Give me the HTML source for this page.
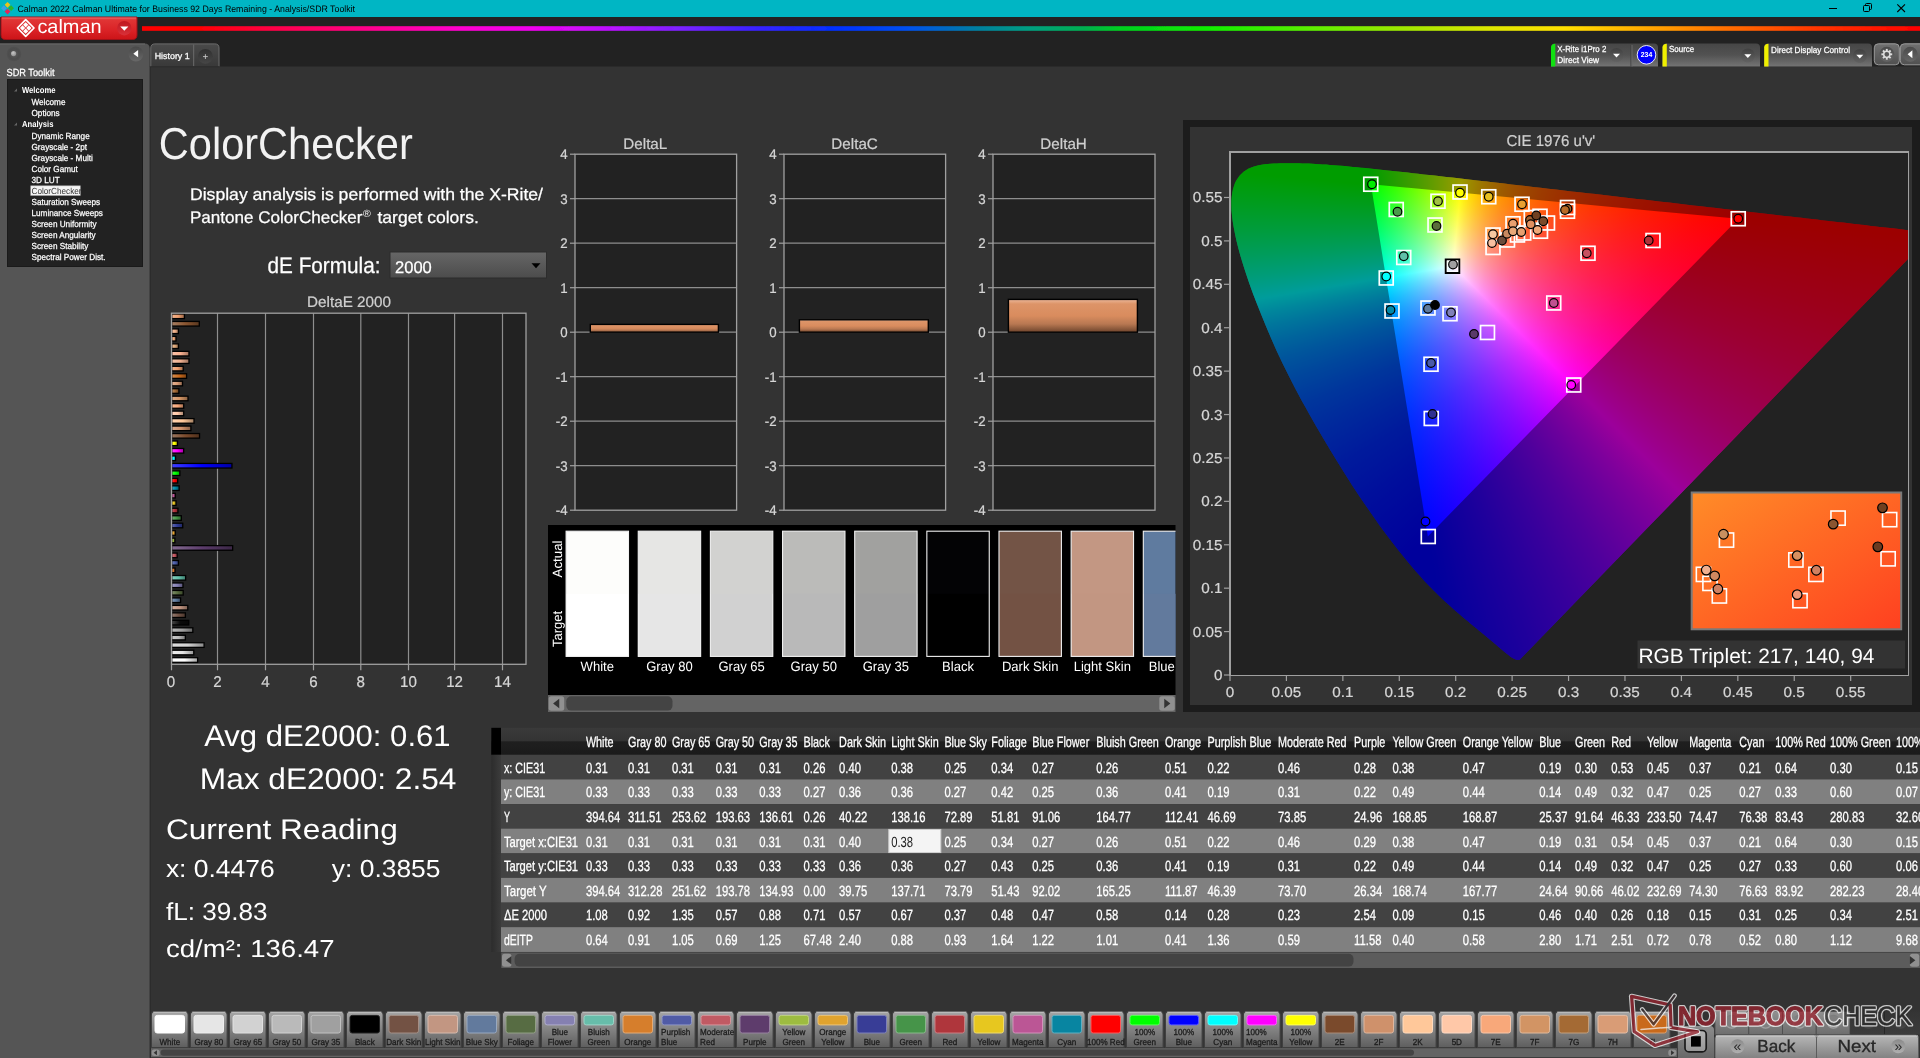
<!DOCTYPE html>
<html lang="en"><head><meta charset="utf-8"><title>Calman ColorChecker</title><style>html,body{margin:0;padding:0}body{background:#333;width:1920px;height:1058px;position:relative;overflow:hidden;font-family:"Liberation Sans",sans-serif}
svg{position:absolute;left:0;top:0;font-family:"Liberation Sans",sans-serif;will-change:transform;text-rendering:geometricPrecision}
.cl{position:absolute;left:0;top:0;width:100%;height:100%}.cd{mix-blend-mode:darken}</style></head><body>
<svg width="1920" height="1058" viewBox="0 0 1920 1058"><defs><linearGradient id="a1" x1="142" y1="0" x2="1920" y2="0" gradientUnits="userSpaceOnUse"><stop offset="0" stop-color="#ff0000"/><stop offset="0.03" stop-color="#ff0000"/><stop offset="0.08" stop-color="#ff0050"/><stop offset="0.13" stop-color="#ff0090"/><stop offset="0.18" stop-color="#ff00d0"/><stop offset="0.22" stop-color="#f000f0"/><stop offset="0.26" stop-color="#c010ff"/><stop offset="0.3" stop-color="#8020ff"/><stop offset="0.34" stop-color="#4020ff"/><stop offset="0.39" stop-color="#0030ff"/><stop offset="0.43" stop-color="#0050f0"/><stop offset="0.47" stop-color="#0080a0"/><stop offset="0.5" stop-color="#00a080"/><stop offset="0.53" stop-color="#00b050"/><stop offset="0.55" stop-color="#00d020"/><stop offset="0.6" stop-color="#10f000"/><stop offset="0.66" stop-color="#60f000"/><stop offset="0.71" stop-color="#a0e800"/><stop offset="0.76" stop-color="#e0e800"/><stop offset="0.8" stop-color="#ffe000"/><stop offset="0.84" stop-color="#ffb000"/><stop offset="0.89" stop-color="#ff7000"/><stop offset="0.94" stop-color="#ff3800"/><stop offset="1" stop-color="#ff0000"/></linearGradient><filter id="blr" x="-1%" y="-100%" width="102%" height="300%"><feGaussianBlur stdDeviation="0 0.7"/></filter><linearGradient id="a2" x1="0" y1="0" x2="0" y2="1"><stop offset="0" stop-color="#e84a4a"/><stop offset="0.15" stop-color="#e03434"/><stop offset="0.6" stop-color="#da2226"/><stop offset="1" stop-color="#cc1418"/></linearGradient><linearGradient id="a3" x1="0" y1="0" x2="0" y2="1"><stop offset="0" stop-color="#c01820"/><stop offset="1" stop-color="#d83038"/></linearGradient><radialGradient id="a4" cx="0.5" cy="0.5" r="0.5"><stop offset="0" stop-color="#5e5e5e"/><stop offset="0.7" stop-color="#4c4c4c"/><stop offset="1" stop-color="#505050"/></radialGradient><radialGradient id="a5" cx="0.4" cy="0.35" r="0.7"><stop offset="0" stop-color="#c8c8c8"/><stop offset="1" stop-color="#8a8a8a"/></radialGradient><linearGradient id="a6" x1="0" y1="0" x2="0" y2="1"><stop offset="0" stop-color="#484848"/><stop offset="1" stop-color="#686868"/></linearGradient><linearGradient id="a7" x1="0" y1="0" x2="0" y2="1"><stop offset="0" stop-color="#4a4a4a"/><stop offset="1" stop-color="#393939"/></linearGradient><linearGradient id="a8" x1="0" y1="0" x2="0" y2="1"><stop offset="0" stop-color="#303030"/><stop offset="1" stop-color="#464646"/></linearGradient><linearGradient id="a9" x1="0" y1="0" x2="0" y2="1"><stop offset="0" stop-color="#464646"/><stop offset="0.5" stop-color="#525252"/><stop offset="1" stop-color="#747474"/></linearGradient><linearGradient id="a10" x1="0" y1="0" x2="0" y2="1"><stop offset="0" stop-color="#404040"/><stop offset="1" stop-color="#626262"/></linearGradient><linearGradient id="a11" x1="0" y1="0" x2="0" y2="1"><stop offset="0" stop-color="#404040"/><stop offset="1" stop-color="#626262"/></linearGradient><linearGradient id="a12" x1="0" y1="0" x2="0" y2="1"><stop offset="0" stop-color="#404040"/><stop offset="1" stop-color="#626262"/></linearGradient><linearGradient id="a13" x1="0" y1="0" x2="0" y2="1"><stop offset="0" stop-color="#707070"/><stop offset="1" stop-color="#505050"/></linearGradient><linearGradient id="a14" x1="0" y1="0" x2="0" y2="1"><stop offset="0" stop-color="#4a4a4a"/><stop offset="1" stop-color="#666"/></linearGradient><linearGradient id="a15" x1="0" y1="0" x2="0" y2="1"><stop offset="0" stop-color="#4a4a4a"/><stop offset="1" stop-color="#666"/></linearGradient><linearGradient id="a16" x1="0" y1="0" x2="0" y2="1"><stop offset="0" stop-color="#666666"/><stop offset="1" stop-color="#4c4c4c"/></linearGradient><linearGradient id="a17" x1="0" y1="0" x2="1" y2="0"><stop offset="0" stop-color="#ffffff"/><stop offset="0.5" stop-color="#ffffff"/><stop offset="1" stop-color="#a5a5a5"/></linearGradient><linearGradient id="a18" x1="0" y1="0" x2="1" y2="0"><stop offset="0" stop-color="#ececec"/><stop offset="0.5" stop-color="#e6e6e6"/><stop offset="1" stop-color="#959595"/></linearGradient><linearGradient id="a19" x1="0" y1="0" x2="1" y2="0"><stop offset="0" stop-color="#dddddd"/><stop offset="0.5" stop-color="#d2d2d2"/><stop offset="1" stop-color="#888888"/></linearGradient><linearGradient id="a20" x1="0" y1="0" x2="1" y2="0"><stop offset="0" stop-color="#cbcbcb"/><stop offset="0.5" stop-color="#bababa"/><stop offset="1" stop-color="#787878"/></linearGradient><linearGradient id="a21" x1="0" y1="0" x2="1" y2="0"><stop offset="0" stop-color="#b7b7b7"/><stop offset="0.5" stop-color="#a0a0a0"/><stop offset="1" stop-color="#686868"/></linearGradient><linearGradient id="a22" x1="0" y1="0" x2="1" y2="0"><stop offset="0" stop-color="#474747"/><stop offset="0.5" stop-color="#0a0a0a"/><stop offset="1" stop-color="#060606"/></linearGradient><linearGradient id="a23" x1="0" y1="0" x2="1" y2="0"><stop offset="0" stop-color="#967e74"/><stop offset="0.5" stop-color="#735446"/><stop offset="1" stop-color="#4a362d"/></linearGradient><linearGradient id="a24" x1="0" y1="0" x2="1" y2="0"><stop offset="0" stop-color="#d1b0a1"/><stop offset="0.5" stop-color="#c29682"/><stop offset="1" stop-color="#7e6154"/></linearGradient><linearGradient id="a25" x1="0" y1="0" x2="1" y2="0"><stop offset="0" stop-color="#869bb6"/><stop offset="0.5" stop-color="#5e7a9e"/><stop offset="1" stop-color="#3d4f66"/></linearGradient><linearGradient id="a26" x1="0" y1="0" x2="1" y2="0"><stop offset="0" stop-color="#81906f"/><stop offset="0.5" stop-color="#586c40"/><stop offset="1" stop-color="#394629"/></linearGradient><linearGradient id="a27" x1="0" y1="0" x2="1" y2="0"><stop offset="0" stop-color="#a39fc6"/><stop offset="0.5" stop-color="#8580b4"/><stop offset="1" stop-color="#565375"/></linearGradient><linearGradient id="a28" x1="0" y1="0" x2="1" y2="0"><stop offset="0" stop-color="#89cfbf"/><stop offset="0.5" stop-color="#62c0aa"/><stop offset="1" stop-color="#3f7c6e"/></linearGradient><linearGradient id="a29" x1="0" y1="0" x2="1" y2="0"><stop offset="0" stop-color="#e49b60"/><stop offset="0.5" stop-color="#dc7a2c"/><stop offset="1" stop-color="#8f4f1c"/></linearGradient><linearGradient id="a30" x1="0" y1="0" x2="1" y2="0"><stop offset="0" stop-color="#7784bd"/><stop offset="0.5" stop-color="#4a5ca8"/><stop offset="1" stop-color="#303b6d"/></linearGradient><linearGradient id="a31" x1="0" y1="0" x2="1" y2="0"><stop offset="0" stop-color="#d27e86"/><stop offset="0.5" stop-color="#c4545e"/><stop offset="1" stop-color="#7f363d"/></linearGradient><linearGradient id="a32" x1="0" y1="0" x2="1" y2="0"><stop offset="0" stop-color="#846c90"/><stop offset="0.5" stop-color="#5c3c6c"/><stop offset="1" stop-color="#3b2746"/></linearGradient><linearGradient id="a33" x1="0" y1="0" x2="1" y2="0"><stop offset="0" stop-color="#b6cc6f"/><stop offset="0.5" stop-color="#9ebc40"/><stop offset="1" stop-color="#667a29"/></linearGradient><linearGradient id="a34" x1="0" y1="0" x2="1" y2="0"><stop offset="0" stop-color="#ecb962"/><stop offset="0.5" stop-color="#e6a22e"/><stop offset="1" stop-color="#95691d"/></linearGradient><linearGradient id="a35" x1="0" y1="0" x2="1" y2="0"><stop offset="0" stop-color="#636cb0"/><stop offset="0.5" stop-color="#303c96"/><stop offset="1" stop-color="#1f2761"/></linearGradient><linearGradient id="a36" x1="0" y1="0" x2="1" y2="0"><stop offset="0" stop-color="#74b075"/><stop offset="0.5" stop-color="#469648"/><stop offset="1" stop-color="#2d612e"/></linearGradient><linearGradient id="a37" x1="0" y1="0" x2="1" y2="0"><stop offset="0" stop-color="#c36369"/><stop offset="0.5" stop-color="#b03038"/><stop offset="1" stop-color="#721f24"/></linearGradient><linearGradient id="a38" x1="0" y1="0" x2="1" y2="0"><stop offset="0" stop-color="#efd457"/><stop offset="0.5" stop-color="#eac620"/><stop offset="1" stop-color="#988014"/></linearGradient><linearGradient id="a39" x1="0" y1="0" x2="1" y2="0"><stop offset="0" stop-color="#ce7eb0"/><stop offset="0.5" stop-color="#be5496"/><stop offset="1" stop-color="#7b3661"/></linearGradient><linearGradient id="a40" x1="0" y1="0" x2="1" y2="0"><stop offset="0" stop-color="#3fa5bc"/><stop offset="0.5" stop-color="#0088a6"/><stop offset="1" stop-color="#00586b"/></linearGradient><linearGradient id="a41" x1="0" y1="0" x2="1" y2="0"><stop offset="0" stop-color="#ff3f3f"/><stop offset="0.5" stop-color="#ff0000"/><stop offset="1" stop-color="#a50000"/></linearGradient><linearGradient id="a42" x1="0" y1="0" x2="1" y2="0"><stop offset="0" stop-color="#3fff3f"/><stop offset="0.5" stop-color="#00ff00"/><stop offset="1" stop-color="#00a500"/></linearGradient><linearGradient id="a43" x1="0" y1="0" x2="1" y2="0"><stop offset="0" stop-color="#3f3fff"/><stop offset="0.5" stop-color="#0000ff"/><stop offset="1" stop-color="#0000a5"/></linearGradient><linearGradient id="a44" x1="0" y1="0" x2="1" y2="0"><stop offset="0" stop-color="#3fffff"/><stop offset="0.5" stop-color="#00ffff"/><stop offset="1" stop-color="#00a5a5"/></linearGradient><linearGradient id="a45" x1="0" y1="0" x2="1" y2="0"><stop offset="0" stop-color="#ff3fff"/><stop offset="0.5" stop-color="#ff00ff"/><stop offset="1" stop-color="#a500a5"/></linearGradient><linearGradient id="a46" x1="0" y1="0" x2="1" y2="0"><stop offset="0" stop-color="#ffff3f"/><stop offset="0.5" stop-color="#ffff00"/><stop offset="1" stop-color="#a5a500"/></linearGradient><linearGradient id="a47" x1="0" y1="0" x2="1" y2="0"><stop offset="0" stop-color="#9b7760"/><stop offset="0.5" stop-color="#7a4a2c"/><stop offset="1" stop-color="#4f301c"/></linearGradient><linearGradient id="a48" x1="0" y1="0" x2="1" y2="0"><stop offset="0" stop-color="#dbac90"/><stop offset="0.5" stop-color="#cf916b"/><stop offset="1" stop-color="#865e45"/></linearGradient><linearGradient id="a49" x1="0" y1="0" x2="1" y2="0"><stop offset="0" stop-color="#ffd5b3"/><stop offset="0.5" stop-color="#ffc89a"/><stop offset="1" stop-color="#a58264"/></linearGradient><linearGradient id="a50" x1="0" y1="0" x2="1" y2="0"><stop offset="0" stop-color="#ffd5bd"/><stop offset="0.5" stop-color="#ffc8a8"/><stop offset="1" stop-color="#a5826d"/></linearGradient><linearGradient id="a51" x1="0" y1="0" x2="1" y2="0"><stop offset="0" stop-color="#f9bd9b"/><stop offset="0.5" stop-color="#f8a87a"/><stop offset="1" stop-color="#a16d4f"/></linearGradient><linearGradient id="a52" x1="0" y1="0" x2="1" y2="0"><stop offset="0" stop-color="#ddae8a"/><stop offset="0.5" stop-color="#d29464"/><stop offset="1" stop-color="#886041"/></linearGradient><linearGradient id="a53" x1="0" y1="0" x2="1" y2="0"><stop offset="0" stop-color="#ba8f66"/><stop offset="0.5" stop-color="#a46a34"/><stop offset="1" stop-color="#6a4421"/></linearGradient><linearGradient id="a54" x1="0" y1="0" x2="1" y2="0"><stop offset="0" stop-color="#e2b498"/><stop offset="0.5" stop-color="#d99c76"/><stop offset="1" stop-color="#8d654c"/></linearGradient><linearGradient id="a55" x1="0" y1="0" x2="1" y2="0"><stop offset="0" stop-color="#d68f54"/><stop offset="0.5" stop-color="#c96a1c"/><stop offset="1" stop-color="#824412"/></linearGradient><linearGradient id="a56" x1="0" y1="0" x2="1" y2="0"><stop offset="0" stop-color="#f3b793"/><stop offset="0.5" stop-color="#f0a070"/><stop offset="1" stop-color="#9c6848"/></linearGradient><linearGradient id="a57" x1="0" y1="0" x2="1" y2="0"><stop offset="0" stop-color="#f3c3ab"/><stop offset="0.5" stop-color="#f0b090"/><stop offset="1" stop-color="#9c725d"/></linearGradient><linearGradient id="a58" x1="0" y1="0" x2="1" y2="0"><stop offset="0" stop-color="#f9c3ab"/><stop offset="0.5" stop-color="#f8b090"/><stop offset="1" stop-color="#a1725d"/></linearGradient><linearGradient id="a59" x1="0" y1="0" x2="1" y2="0"><stop offset="0" stop-color="#e7bd99"/><stop offset="0.5" stop-color="#e0a878"/><stop offset="1" stop-color="#916d4e"/></linearGradient><linearGradient id="a60" x1="0" y1="0" x2="1" y2="0"><stop offset="0" stop-color="#f3bd99"/><stop offset="0.5" stop-color="#f0a878"/><stop offset="1" stop-color="#9c6d4e"/></linearGradient><linearGradient id="a61" x1="0" y1="0" x2="1" y2="0"><stop offset="0" stop-color="#f3c3a5"/><stop offset="0.5" stop-color="#f0b088"/><stop offset="1" stop-color="#9c7258"/></linearGradient><linearGradient id="a62" x1="0" y1="0" x2="1" y2="0"><stop offset="0" stop-color="#a77f63"/><stop offset="0.5" stop-color="#8a5530"/><stop offset="1" stop-color="#59371f"/></linearGradient><linearGradient id="a63" x1="0" y1="0" x2="1" y2="0"><stop offset="0" stop-color="#f3b793"/><stop offset="0.5" stop-color="#f0a070"/><stop offset="1" stop-color="#9c6848"/></linearGradient><linearGradient id="a64" x1="0" y1="0" x2="0" y2="1"><stop offset="0" stop-color="#ecb799"/><stop offset="0.14" stop-color="#dd9468"/><stop offset="0.5" stop-color="#d98c5e"/><stop offset="0.75" stop-color="#b87852"/><stop offset="1" stop-color="#6e442c"/></linearGradient><linearGradient id="a65" x1="0" y1="0" x2="0" y2="1"><stop offset="0" stop-color="#ecb799"/><stop offset="0.14" stop-color="#dd9468"/><stop offset="0.5" stop-color="#d98c5e"/><stop offset="0.75" stop-color="#b87852"/><stop offset="1" stop-color="#6e442c"/></linearGradient><linearGradient id="a66" x1="0" y1="0" x2="0" y2="1"><stop offset="0" stop-color="#ecb799"/><stop offset="0.14" stop-color="#dd9468"/><stop offset="0.5" stop-color="#d98c5e"/><stop offset="0.75" stop-color="#b87852"/><stop offset="1" stop-color="#6e442c"/></linearGradient><clipPath id="swc"><rect x="548.5" y="525" width="627" height="170"/></clipPath><linearGradient id="a67" x1="0" y1="0" x2="0" y2="1"><stop offset="0" stop-color="#3a3a3a"/><stop offset="0.48" stop-color="#333333"/><stop offset="0.52" stop-color="#1f1f1f"/><stop offset="1" stop-color="#1a1a1a"/></linearGradient><clipPath id="tbc"><rect x="491" y="720" width="1429" height="250"/></clipPath><linearGradient id="a68" x1="0" y1="0" x2="1" y2="0"><stop offset="0" stop-color="#2c2c2c"/><stop offset="1" stop-color="#3c3c3c"/></linearGradient><linearGradient id="a69" x1="0" y1="0" x2="1" y2="0"><stop offset="0" stop-color="#2c2c2c"/><stop offset="1" stop-color="#3c3c3c"/></linearGradient><linearGradient id="a70" x1="0" y1="0" x2="1" y2="0"><stop offset="0" stop-color="#2c2c2c"/><stop offset="1" stop-color="#3c3c3c"/></linearGradient><linearGradient id="a71" x1="0" y1="0" x2="1" y2="0"><stop offset="0" stop-color="#2c2c2c"/><stop offset="1" stop-color="#3c3c3c"/></linearGradient><linearGradient id="a72" x1="0" y1="0" x2="1" y2="0"><stop offset="0" stop-color="#2c2c2c"/><stop offset="1" stop-color="#3c3c3c"/></linearGradient><linearGradient id="a73" x1="0" y1="0" x2="1" y2="0"><stop offset="0" stop-color="#2c2c2c"/><stop offset="1" stop-color="#3c3c3c"/></linearGradient><linearGradient id="a74" x1="0" y1="0" x2="1" y2="0"><stop offset="0" stop-color="#2c2c2c"/><stop offset="1" stop-color="#3c3c3c"/></linearGradient><linearGradient id="a75" x1="0" y1="0" x2="1" y2="0"><stop offset="0" stop-color="#2c2c2c"/><stop offset="1" stop-color="#3c3c3c"/></linearGradient><linearGradient id="a76" x1="0" y1="0" x2="0" y2="1"><stop offset="0" stop-color="#a6a6a6"/><stop offset="0.5" stop-color="#828282"/><stop offset="1" stop-color="#5e5e5e"/></linearGradient><clipPath id="bbc"><rect x="150" y="1005" width="1527" height="53"/></clipPath><linearGradient id="a77" x1="0" y1="0" x2="0" y2="1"><stop offset="0" stop-color="#8c8c8c"/><stop offset="1" stop-color="#686868"/></linearGradient><linearGradient id="a78" x1="0" y1="0" x2="0" y2="1"><stop offset="0" stop-color="#b4b4b4"/><stop offset="1" stop-color="#969696"/></linearGradient><linearGradient id="a79" x1="0" y1="0" x2="0" y2="1"><stop offset="0" stop-color="#909090"/><stop offset="1" stop-color="#6e6e6e"/></linearGradient><linearGradient id="a80" x1="0" y1="0" x2="0" y2="1"><stop offset="0" stop-color="#7a7a7a"/><stop offset="1" stop-color="#a2a2a2"/></linearGradient><linearGradient id="a81" x1="0" y1="0" x2="0" y2="1"><stop offset="0" stop-color="#343434"/><stop offset="1" stop-color="#3c3c3c"/></linearGradient><linearGradient id="a82" x1="0" y1="0" x2="0" y2="1"><stop offset="0" stop-color="#2c2c2c"/><stop offset="1" stop-color="#484848"/></linearGradient><linearGradient id="a83" x1="0" y1="0" x2="0" y2="1"><stop offset="0" stop-color="#2c2c2c"/><stop offset="1" stop-color="#484848"/></linearGradient><linearGradient id="a84" x1="0" y1="0" x2="0" y2="1"><stop offset="0" stop-color="#b8b8b8"/><stop offset="0.5" stop-color="#9a9a9a"/><stop offset="1" stop-color="#7e7e7e"/></linearGradient><linearGradient id="a85" x1="0" y1="0" x2="0" y2="1"><stop offset="0" stop-color="#8a8a8a"/><stop offset="1" stop-color="#b0b0b0"/></linearGradient><linearGradient id="a86" x1="0" y1="0" x2="0" y2="1"><stop offset="0" stop-color="#8a8a8a"/><stop offset="1" stop-color="#b0b0b0"/></linearGradient></defs>
<rect x="0" y="0" width="1920" height="1058" fill="#333333"/>
<rect x="0" y="0" width="1920" height="17" fill="#00b6c4"/>
<path d="M7.5 1.9 L10.4 4.8 L7.5 7.7 L4.6 4.8 Z" fill="#e8c41c"/>
<path d="M3.9 5.3 L6.8 8.2 L3.9 11.1 L1 8.2 Z" fill="#3aa0e8"/>
<path d="M11.1 5.3 L14 8.2 L11.1 11.1 L8.2 8.2 Z" fill="#2cb42c"/>
<path d="M7.5 8.7 L10.4 11.6 L7.5 14.5 L4.6 11.6 Z" fill="#e0285a"/>
<text x="17.5" y="12.2" font-size="9.3" fill="#000" textLength="337.5" lengthAdjust="spacingAndGlyphs">Calman 2022 Calman Ultimate for Business 92 Days Remaining  - Analysis/SDR Toolkit</text>
<line x1="1829" y1="8.5" x2="1837" y2="8.5" stroke="#000" stroke-width="1"/>
<rect x="1863.5" y="5.5" width="6" height="6" fill="none" rx="1" stroke="#000" stroke-width="1"/>
<path d="M1865.5 5.5 V4.5 Q1865.5 3.5 1866.5 3.5 H1870.5 Q1871.5 3.5 1871.5 4.5 V8.5 Q1871.5 9.5 1870.5 9.5 H1869.5" fill="none" stroke="#000" stroke-width="1"/>
<path d="M1897.3 4.3 L1905 12 M1905 4.3 L1897.3 12" fill="none" stroke="#000" stroke-width="1.1"/>
<rect x="0" y="17" width="1920" height="49.5" fill="#222222"/>
<rect x="142" y="26.2" width="1778" height="4.6" fill="url(#a1)" filter="url(#blr)"/>
<path d="M1 17 H137 V35 Q137 39.5 132.5 39.5 H5.5 Q1 39.5 1 35 Z" fill="url(#a2)" stroke="#a01018" stroke-width="1"/>
<line x1="2" y1="18" x2="136" y2="18" stroke="#f08080" stroke-width="1" opacity=".6"/>
<path d="M25.7 19.7 L34 28 L25.7 36.3 L17.4 28 Z" fill="none" stroke="#fff" stroke-width="1.7" stroke-linejoin="round"/>
<path d="M25.7 22.19 L28.36 24.85 L25.7 27.5 L23.04 24.85 Z" fill="#fff"/>
<path d="M28.85 25.34 L31.51 28 L28.85 30.66 L26.2 28 Z" fill="#fff"/>
<path d="M25.7 28.5 L28.36 31.15 L25.7 33.81 L23.04 31.15 Z" fill="#fff"/>
<path d="M22.55 25.34 L25.2 28 L22.55 30.66 L19.89 28 Z" fill="#fff"/>
<text x="37.4" y="33.1" font-size="19.3" fill="#fff" textLength="64.2" lengthAdjust="spacingAndGlyphs">calman</text>
<circle cx="124.3" cy="28.2" r="7.2" fill="url(#a3)"/>
<path d="M120.2 26.6 H128.4 L124.3 30.8 Z" fill="#fff"/>
<path d="M0 43.5 H144.5 Q149.7 43.5 149.7 48.5 V1058 H0 Z" fill="#555555"/>
<line x1="0" y1="44" x2="145" y2="44" stroke="#6a6a6a" stroke-width="1"/>
<line x1="150.3" y1="66" x2="150.3" y2="1058" stroke="#2b2b2b" stroke-width="1"/>
<circle cx="14" cy="54" r="7.3" fill="url(#a4)"/>
<circle cx="13.6" cy="53.6" r="2.6" fill="url(#a5)"/>
<circle cx="135.9" cy="54" r="7.4" fill="url(#a6)"/>
<path d="M133.3 53.7 L138.1 50 V57.3 Z" fill="#fff"/>
<text x="6.5" y="76" font-size="10.4" fill="#fff" textLength="48" lengthAdjust="spacingAndGlyphs" stroke="#fff" stroke-width=".25">SDR Toolkit</text>
<rect x="7" y="79" width="136" height="188" fill="#222222"/>
<rect x="7.5" y="79.5" width="135" height="187" fill="none" stroke="#1a1a1a" stroke-width="1"/>
<text x="22" y="93" font-size="8.8" fill="#fff" font-weight="bold" textLength="33.47" lengthAdjust="spacingAndGlyphs">Welcome</text>
<path d="M14 91.5 l3 -3 v3 z" fill="#666"/>
<text x="31.5" y="105.2" font-size="8.8" fill="#fff" textLength="33.96" lengthAdjust="spacingAndGlyphs" stroke="#fff" stroke-width=".25">Welcome</text>
<text x="31.5" y="115.9" font-size="8.8" fill="#fff" textLength="28.2" lengthAdjust="spacingAndGlyphs" stroke="#fff" stroke-width=".25">Options</text>
<text x="22" y="127" font-size="8.8" fill="#fff" font-weight="bold" textLength="31.49" lengthAdjust="spacingAndGlyphs">Analysis</text>
<path d="M14 125.5 l3 -3 v3 z" fill="#666"/>
<text x="31.5" y="139" font-size="8.8" fill="#fff" textLength="58.22" lengthAdjust="spacingAndGlyphs" stroke="#fff" stroke-width=".25">Dynamic Range</text>
<text x="31.5" y="149.8" font-size="8.8" fill="#fff" textLength="55.49" lengthAdjust="spacingAndGlyphs" stroke="#fff" stroke-width=".25">Grayscale - 2pt</text>
<text x="31.5" y="160.8" font-size="8.8" fill="#fff" textLength="61.39" lengthAdjust="spacingAndGlyphs" stroke="#fff" stroke-width=".25">Grayscale - Multi</text>
<text x="31.5" y="171.8" font-size="8.8" fill="#fff" textLength="46.39" lengthAdjust="spacingAndGlyphs" stroke="#fff" stroke-width=".25">Color Gamut</text>
<text x="31.5" y="182.5" font-size="8.8" fill="#fff" textLength="28.2" lengthAdjust="spacingAndGlyphs" stroke="#fff" stroke-width=".25">3D LUT</text>
<rect x="30.7" y="185.8" width="49.6" height="9.8" fill="#f4f4f4" stroke="#999" stroke-width="0.6"/>
<text x="31.5" y="193.7" font-size="8.8" fill="#333" textLength="50.03" lengthAdjust="spacingAndGlyphs">ColorChecker</text>
<text x="31.5" y="205" font-size="8.8" fill="#fff" textLength="68.7" lengthAdjust="spacingAndGlyphs" stroke="#fff" stroke-width=".25">Saturation Sweeps</text>
<text x="31.5" y="215.8" font-size="8.8" fill="#fff" textLength="71.43" lengthAdjust="spacingAndGlyphs" stroke="#fff" stroke-width=".25">Luminance Sweeps</text>
<text x="31.5" y="226.8" font-size="8.8" fill="#fff" textLength="65.04" lengthAdjust="spacingAndGlyphs" stroke="#fff" stroke-width=".25">Screen Uniformity</text>
<text x="31.5" y="238" font-size="8.8" fill="#fff" textLength="64.15" lengthAdjust="spacingAndGlyphs" stroke="#fff" stroke-width=".25">Screen Angularity</text>
<text x="31.5" y="248.8" font-size="8.8" fill="#fff" textLength="56.86" lengthAdjust="spacingAndGlyphs" stroke="#fff" stroke-width=".25">Screen Stability</text>
<text x="31.5" y="260" font-size="8.8" fill="#fff" textLength="74.14" lengthAdjust="spacingAndGlyphs" stroke="#fff" stroke-width=".25">Spectral Power Dist.</text>
<path d="M150.8 66.5 V48 Q150.8 43.9 154.9 43.9 H214.9 Q219 43.9 219 48 V66.5" fill="url(#a7)" stroke="#6c6c6c" stroke-width="1"/>
<line x1="193.7" y1="44.5" x2="193.7" y2="66.3" stroke="#6c6c6c" stroke-width="1"/>
<rect x="150.3" y="66.2" width="69.2" height="1.2" fill="#2e2e2e"/>
<text x="154.7" y="59" font-size="8.8" fill="#fff" textLength="35" lengthAdjust="spacingAndGlyphs" stroke="#fff" stroke-width=".25">History 1</text>
<circle cx="205.4" cy="56.3" r="7.4" fill="url(#a8)"/>
<path d="M203 56.6 H207.8 M205.4 54.2 V59" fill="none" stroke="#c4c4c4" stroke-width="0.9"/>
<path d="M1551 66.5 V47.5 Q1551 43.5 1555 43.5 H1654 Q1658 43.5 1658 47.5 V66.5 Z" fill="url(#a9)"/>
<path d="M1551 66.5 V47.5 Q1551 44 1555.3 43.8 V66.5 Z" fill="#10e010"/>
<text x="1557.3" y="52.3" font-size="8.8" fill="#fff" textLength="49" lengthAdjust="spacingAndGlyphs" stroke="#fff" stroke-width=".25">X-Rite i1Pro 2</text>
<text x="1557.3" y="62.8" font-size="8.8" fill="#fff" textLength="41.8" lengthAdjust="spacingAndGlyphs" stroke="#fff" stroke-width=".25">Direct View</text>
<circle cx="1616.5" cy="55" r="7" fill="url(#a10)"/>
<path d="M1613 53.7 h7 l-3.5 3.8 z" fill="#fff"/>
<line x1="1631" y1="45" x2="1631" y2="66.5" stroke="#3e3e3e" stroke-width="1"/>
<line x1="1632" y1="45" x2="1632" y2="66.5" stroke="#6a6a6a" stroke-width="1"/>
<circle cx="1646.5" cy="54.8" r="9.3" fill="#0000ff" stroke="#fff" stroke-width="0.9"/>
<text x="1646.5" y="57.4" font-size="7.2" fill="#fff" text-anchor="middle" font-weight="bold" textLength="11.5" lengthAdjust="spacingAndGlyphs">234</text>
<path d="M1662.5 66.5 V47.5 Q1662.5 43.5 1666.5 43.5 H1756 Q1760 43.5 1760 47.5 V66.5 Z" fill="url(#a9)"/>
<path d="M1662.5 66.5 V47.5 Q1662.5 44 1666.8 43.8 V66.5 Z" fill="#f0f000"/>
<text x="1669" y="52.3" font-size="8.8" fill="#fff" textLength="25.3" lengthAdjust="spacingAndGlyphs" stroke="#fff" stroke-width=".25">Source</text>
<circle cx="1747.8" cy="55.5" r="7" fill="url(#a11)"/>
<path d="M1744.3 54.2 h7 l-3.5 3.8 z" fill="#fff"/>
<path d="M1764.2 66.5 V47.5 Q1764.2 43.5 1768.2 43.5 H1868 Q1872 43.5 1872 47.5 V66.5 Z" fill="url(#a9)"/>
<path d="M1764.2 66.5 V47.5 Q1764.2 44 1768.5 43.8 V66.5 Z" fill="#f0f000"/>
<text x="1771" y="52.8" font-size="8.8" fill="#fff" textLength="79" lengthAdjust="spacingAndGlyphs" stroke="#fff" stroke-width=".25">Direct Display Control</text>
<circle cx="1859.8" cy="56" r="7" fill="url(#a12)"/>
<path d="M1856.3 54.7 h7 l-3.5 3.8 z" fill="#fff"/>
<rect x="1874.3" y="43.8" width="25" height="21" fill="url(#a13)" rx="4" stroke="#9a9a9a" stroke-width="1"/>
<rect x="1900.3" y="43.8" width="25" height="21" fill="url(#a13)" rx="4" stroke="#9a9a9a" stroke-width="1"/>
<circle cx="1886.8" cy="54.3" r="7.5" fill="url(#a14)"/>
<line x1="1890" y1="54.3" x2="1892.2" y2="54.3" stroke="#ddd" stroke-width="1.9"/><line x1="1889.06" y1="56.56" x2="1890.62" y2="58.12" stroke="#ddd" stroke-width="1.9"/><line x1="1886.8" y1="57.5" x2="1886.8" y2="59.7" stroke="#ddd" stroke-width="1.9"/><line x1="1884.54" y1="56.56" x2="1882.98" y2="58.12" stroke="#ddd" stroke-width="1.9"/><line x1="1883.6" y1="54.3" x2="1881.4" y2="54.3" stroke="#ddd" stroke-width="1.9"/><line x1="1884.54" y1="52.04" x2="1882.98" y2="50.48" stroke="#ddd" stroke-width="1.9"/><line x1="1886.8" y1="51.1" x2="1886.8" y2="48.9" stroke="#ddd" stroke-width="1.9"/><line x1="1889.06" y1="52.04" x2="1890.62" y2="50.48" stroke="#ddd" stroke-width="1.9"/>
<circle cx="1886.8" cy="54.3" r="3.1" fill="none" stroke="#ddd" stroke-width="1.5"/>
<circle cx="1910.3" cy="54.3" r="7.5" fill="url(#a15)"/>
<path d="M1907.6 54.3 L1912.4 50.3 V58.3 Z" fill="#fff"/>
<text x="158.8" y="158.8" font-size="44.7" fill="#f2f2f2" textLength="254" lengthAdjust="spacingAndGlyphs">ColorChecker</text>
<text x="190" y="199.5" font-size="16.9" fill="#fff" textLength="353" lengthAdjust="spacingAndGlyphs" stroke="#fff" stroke-width=".25">Display analysis is performed with the X-Rite/</text>
<text x="190" y="222.5" font-size="16.9" fill="#fff" textLength="172.5" lengthAdjust="spacingAndGlyphs" stroke="#fff" stroke-width=".25">Pantone ColorChecker</text>
<text x="363" y="217.2" font-size="10.5" fill="#fff">®</text>
<text x="377.5" y="222.5" font-size="16.9" fill="#fff" textLength="101.3" lengthAdjust="spacingAndGlyphs" stroke="#fff" stroke-width=".25">target colors.</text>
<text x="267.5" y="272.5" font-size="22.4" fill="#fff" textLength="113" lengthAdjust="spacingAndGlyphs" stroke="#fff" stroke-width=".25">dE Formula:</text>
<rect x="390" y="252" width="156.5" height="26" fill="url(#a16)" stroke="#2c2c2c" stroke-width="1"/>
<text x="395" y="273" font-size="16.9" fill="#fff" textLength="36.8" lengthAdjust="spacingAndGlyphs" stroke="#fff" stroke-width=".25">2000</text>
<path d="M531.5 263.2 h9 l-4.5 5 z" fill="#000"/>
<text x="349" y="307" font-size="15.2" fill="#cfcfcf" text-anchor="middle" textLength="84" lengthAdjust="spacingAndGlyphs" stroke="#cfcfcf" stroke-width=".22">DeltaE 2000</text>
<rect x="171.5" y="313.2" width="354.5" height="351.1" fill="#222222"/>
<line x1="217.5" y1="313.2" x2="217.5" y2="664.3" stroke="#8e8e8e" stroke-width="1.2"/>
<line x1="265.5" y1="313.2" x2="265.5" y2="664.3" stroke="#8e8e8e" stroke-width="1.2"/>
<line x1="313.5" y1="313.2" x2="313.5" y2="664.3" stroke="#8e8e8e" stroke-width="1.2"/>
<line x1="360.8" y1="313.2" x2="360.8" y2="664.3" stroke="#8e8e8e" stroke-width="1.2"/>
<line x1="408.5" y1="313.2" x2="408.5" y2="664.3" stroke="#8e8e8e" stroke-width="1.2"/>
<line x1="454.6" y1="313.2" x2="454.6" y2="664.3" stroke="#8e8e8e" stroke-width="1.2"/>
<line x1="502.5" y1="313.2" x2="502.5" y2="664.3" stroke="#8e8e8e" stroke-width="1.2"/>
<line x1="171.5" y1="664.3" x2="171.5" y2="670.3" stroke="#a0a0a0" stroke-width="1.2"/>
<line x1="217.5" y1="664.3" x2="217.5" y2="670.3" stroke="#a0a0a0" stroke-width="1.2"/>
<line x1="265.5" y1="664.3" x2="265.5" y2="670.3" stroke="#a0a0a0" stroke-width="1.2"/>
<line x1="313.5" y1="664.3" x2="313.5" y2="670.3" stroke="#a0a0a0" stroke-width="1.2"/>
<line x1="360.8" y1="664.3" x2="360.8" y2="670.3" stroke="#a0a0a0" stroke-width="1.2"/>
<line x1="408.5" y1="664.3" x2="408.5" y2="670.3" stroke="#a0a0a0" stroke-width="1.2"/>
<line x1="454.6" y1="664.3" x2="454.6" y2="670.3" stroke="#a0a0a0" stroke-width="1.2"/>
<line x1="502.5" y1="664.3" x2="502.5" y2="670.3" stroke="#a0a0a0" stroke-width="1.2"/>
<rect x="171.7" y="657.7" width="25.92" height="4.6" fill="url(#a17)" stroke="#000" stroke-width="1.3"/>
<rect x="171.7" y="650.23" width="22.08" height="4.6" fill="url(#a18)" stroke="#000" stroke-width="1.3"/>
<rect x="171.7" y="642.76" width="32.4" height="4.6" fill="url(#a19)" stroke="#000" stroke-width="1.3"/>
<rect x="171.7" y="635.28" width="13.68" height="4.6" fill="url(#a20)" stroke="#000" stroke-width="1.3"/>
<rect x="171.7" y="627.81" width="21.12" height="4.6" fill="url(#a21)" stroke="#000" stroke-width="1.3"/>
<rect x="171.7" y="620.34" width="17.04" height="4.6" fill="url(#a22)" stroke="#000" stroke-width="1.3"/>
<rect x="171.7" y="612.87" width="13.68" height="4.6" fill="url(#a23)" stroke="#000" stroke-width="1.3"/>
<rect x="171.7" y="605.4" width="16.08" height="4.6" fill="url(#a24)" stroke="#000" stroke-width="1.3"/>
<rect x="171.7" y="597.92" width="8.88" height="4.6" fill="url(#a25)" stroke="#000" stroke-width="1.3"/>
<rect x="171.7" y="590.45" width="11.52" height="4.6" fill="url(#a26)" stroke="#000" stroke-width="1.3"/>
<rect x="171.7" y="582.98" width="11.28" height="4.6" fill="url(#a27)" stroke="#000" stroke-width="1.3"/>
<rect x="171.7" y="575.51" width="13.92" height="4.6" fill="url(#a28)" stroke="#000" stroke-width="1.3"/>
<rect x="171.7" y="568.04" width="3.36" height="4.6" fill="url(#a29)" stroke="#000" stroke-width="1.3"/>
<rect x="171.7" y="560.56" width="6.72" height="4.6" fill="url(#a30)" stroke="#000" stroke-width="1.3"/>
<rect x="171.7" y="553.09" width="5.52" height="4.6" fill="url(#a31)" stroke="#000" stroke-width="1.3"/>
<rect x="171.7" y="545.62" width="60.96" height="4.6" fill="url(#a32)" stroke="#000" stroke-width="1.3"/>
<rect x="171.7" y="538.15" width="3.2" height="4.6" fill="url(#a33)" stroke="#000" stroke-width="1.3"/>
<rect x="171.7" y="530.68" width="3.6" height="4.6" fill="url(#a34)" stroke="#000" stroke-width="1.3"/>
<rect x="171.7" y="523.2" width="11.04" height="4.6" fill="url(#a35)" stroke="#000" stroke-width="1.3"/>
<rect x="171.7" y="515.73" width="9.6" height="4.6" fill="url(#a36)" stroke="#000" stroke-width="1.3"/>
<rect x="171.7" y="508.26" width="6.24" height="4.6" fill="url(#a37)" stroke="#000" stroke-width="1.3"/>
<rect x="171.7" y="500.79" width="4.32" height="4.6" fill="url(#a38)" stroke="#000" stroke-width="1.3"/>
<rect x="171.7" y="493.32" width="3.6" height="4.6" fill="url(#a39)" stroke="#000" stroke-width="1.3"/>
<rect x="171.7" y="485.84" width="7.44" height="4.6" fill="url(#a40)" stroke="#000" stroke-width="1.3"/>
<rect x="171.7" y="478.37" width="6" height="4.6" fill="url(#a41)" stroke="#000" stroke-width="1.3"/>
<rect x="171.7" y="470.9" width="8.16" height="4.6" fill="url(#a42)" stroke="#000" stroke-width="1.3"/>
<rect x="171.7" y="463.43" width="60.24" height="4.6" fill="url(#a43)" stroke="#000" stroke-width="1.3"/>
<rect x="171.7" y="455.96" width="3.84" height="4.6" fill="url(#a44)" stroke="#000" stroke-width="1.3"/>
<rect x="171.7" y="448.48" width="12" height="4.6" fill="url(#a45)" stroke="#000" stroke-width="1.3"/>
<rect x="171.7" y="441.01" width="5.76" height="4.6" fill="url(#a46)" stroke="#000" stroke-width="1.3"/>
<rect x="171.7" y="433.54" width="27.84" height="4.6" fill="url(#a47)" stroke="#000" stroke-width="1.3"/>
<rect x="171.7" y="426.07" width="19.2" height="4.6" fill="url(#a48)" stroke="#000" stroke-width="1.3"/>
<rect x="171.7" y="418.6" width="22.32" height="4.6" fill="url(#a49)" stroke="#000" stroke-width="1.3"/>
<rect x="171.7" y="411.12" width="12" height="4.6" fill="url(#a50)" stroke="#000" stroke-width="1.3"/>
<rect x="171.7" y="403.65" width="12" height="4.6" fill="url(#a51)" stroke="#000" stroke-width="1.3"/>
<rect x="171.7" y="396.18" width="16.32" height="4.6" fill="url(#a52)" stroke="#000" stroke-width="1.3"/>
<rect x="171.7" y="388.71" width="7.2" height="4.6" fill="url(#a53)" stroke="#000" stroke-width="1.3"/>
<rect x="171.7" y="381.24" width="10.8" height="4.6" fill="url(#a54)" stroke="#000" stroke-width="1.3"/>
<rect x="171.7" y="373.76" width="14.88" height="4.6" fill="url(#a55)" stroke="#000" stroke-width="1.3"/>
<rect x="171.7" y="366.29" width="11.52" height="4.6" fill="url(#a56)" stroke="#000" stroke-width="1.3"/>
<rect x="171.7" y="358.82" width="17.28" height="4.6" fill="url(#a57)" stroke="#000" stroke-width="1.3"/>
<rect x="171.7" y="351.35" width="17.28" height="4.6" fill="url(#a58)" stroke="#000" stroke-width="1.3"/>
<rect x="171.7" y="343.88" width="6.72" height="4.6" fill="url(#a59)" stroke="#000" stroke-width="1.3"/>
<rect x="171.7" y="336.4" width="4.32" height="4.6" fill="url(#a60)" stroke="#000" stroke-width="1.3"/>
<rect x="171.7" y="328.93" width="6.72" height="4.6" fill="url(#a61)" stroke="#000" stroke-width="1.3"/>
<rect x="171.7" y="321.46" width="27.6" height="4.6" fill="url(#a62)" stroke="#000" stroke-width="1.3"/>
<rect x="171.7" y="313.99" width="12.72" height="4.6" fill="url(#a63)" stroke="#000" stroke-width="1.3"/>
<rect x="171.5" y="313.2" width="354.5" height="351.1" fill="none" stroke="#a0a0a0" stroke-width="1.3"/>
<text x="171" y="687.4" font-size="15.6" fill="#d6d6d6" text-anchor="middle" textLength="8.42" lengthAdjust="spacingAndGlyphs" stroke="#d6d6d6" stroke-width=".22">0</text>
<text x="217.5" y="687.4" font-size="15.6" fill="#d6d6d6" text-anchor="middle" textLength="8.42" lengthAdjust="spacingAndGlyphs" stroke="#d6d6d6" stroke-width=".22">2</text>
<text x="265.5" y="687.4" font-size="15.6" fill="#d6d6d6" text-anchor="middle" textLength="8.42" lengthAdjust="spacingAndGlyphs" stroke="#d6d6d6" stroke-width=".22">4</text>
<text x="313.5" y="687.4" font-size="15.6" fill="#d6d6d6" text-anchor="middle" textLength="8.42" lengthAdjust="spacingAndGlyphs" stroke="#d6d6d6" stroke-width=".22">6</text>
<text x="360.8" y="687.4" font-size="15.6" fill="#d6d6d6" text-anchor="middle" textLength="8.42" lengthAdjust="spacingAndGlyphs" stroke="#d6d6d6" stroke-width=".22">8</text>
<text x="408.5" y="687.4" font-size="15.6" fill="#d6d6d6" text-anchor="middle" textLength="16.83" lengthAdjust="spacingAndGlyphs" stroke="#d6d6d6" stroke-width=".22">10</text>
<text x="454.6" y="687.4" font-size="15.6" fill="#d6d6d6" text-anchor="middle" textLength="16.83" lengthAdjust="spacingAndGlyphs" stroke="#d6d6d6" stroke-width=".22">12</text>
<text x="502.5" y="687.4" font-size="15.6" fill="#d6d6d6" text-anchor="middle" textLength="16.83" lengthAdjust="spacingAndGlyphs" stroke="#d6d6d6" stroke-width=".22">14</text>
<rect x="575" y="154.2" width="161.6" height="356" fill="#222222"/>
<line x1="570" y1="154.2" x2="575" y2="154.2" stroke="#a0a0a0" stroke-width="1.2"/>
<text x="567.7" y="159.2" font-size="14" fill="#d6d6d6" text-anchor="end" textLength="7.4" lengthAdjust="spacingAndGlyphs" stroke="#d6d6d6" stroke-width=".22">4</text>
<line x1="575" y1="198.7" x2="736.6" y2="198.7" stroke="#8e8e8e" stroke-width="1.2"/>
<line x1="570" y1="198.7" x2="575" y2="198.7" stroke="#a0a0a0" stroke-width="1.2"/>
<text x="567.7" y="203.7" font-size="14" fill="#d6d6d6" text-anchor="end" textLength="7.4" lengthAdjust="spacingAndGlyphs" stroke="#d6d6d6" stroke-width=".22">3</text>
<line x1="575" y1="243.2" x2="736.6" y2="243.2" stroke="#8e8e8e" stroke-width="1.2"/>
<line x1="570" y1="243.2" x2="575" y2="243.2" stroke="#a0a0a0" stroke-width="1.2"/>
<text x="567.7" y="248.2" font-size="14" fill="#d6d6d6" text-anchor="end" textLength="7.4" lengthAdjust="spacingAndGlyphs" stroke="#d6d6d6" stroke-width=".22">2</text>
<line x1="575" y1="287.7" x2="736.6" y2="287.7" stroke="#8e8e8e" stroke-width="1.2"/>
<line x1="570" y1="287.7" x2="575" y2="287.7" stroke="#a0a0a0" stroke-width="1.2"/>
<text x="567.7" y="292.7" font-size="14" fill="#d6d6d6" text-anchor="end" textLength="7.4" lengthAdjust="spacingAndGlyphs" stroke="#d6d6d6" stroke-width=".22">1</text>
<line x1="575" y1="332.2" x2="736.6" y2="332.2" stroke="#8e8e8e" stroke-width="1.2"/>
<line x1="570" y1="332.2" x2="575" y2="332.2" stroke="#a0a0a0" stroke-width="1.2"/>
<text x="567.7" y="337.2" font-size="14" fill="#d6d6d6" text-anchor="end" textLength="7.4" lengthAdjust="spacingAndGlyphs" stroke="#d6d6d6" stroke-width=".22">0</text>
<line x1="575" y1="376.7" x2="736.6" y2="376.7" stroke="#8e8e8e" stroke-width="1.2"/>
<line x1="570" y1="376.7" x2="575" y2="376.7" stroke="#a0a0a0" stroke-width="1.2"/>
<text x="567.7" y="381.7" font-size="14" fill="#d6d6d6" text-anchor="end" textLength="11.83" lengthAdjust="spacingAndGlyphs" stroke="#d6d6d6" stroke-width=".22">-1</text>
<line x1="575" y1="421.2" x2="736.6" y2="421.2" stroke="#8e8e8e" stroke-width="1.2"/>
<line x1="570" y1="421.2" x2="575" y2="421.2" stroke="#a0a0a0" stroke-width="1.2"/>
<text x="567.7" y="426.2" font-size="14" fill="#d6d6d6" text-anchor="end" textLength="11.83" lengthAdjust="spacingAndGlyphs" stroke="#d6d6d6" stroke-width=".22">-2</text>
<line x1="575" y1="465.7" x2="736.6" y2="465.7" stroke="#8e8e8e" stroke-width="1.2"/>
<line x1="570" y1="465.7" x2="575" y2="465.7" stroke="#a0a0a0" stroke-width="1.2"/>
<text x="567.7" y="470.7" font-size="14" fill="#d6d6d6" text-anchor="end" textLength="11.83" lengthAdjust="spacingAndGlyphs" stroke="#d6d6d6" stroke-width=".22">-3</text>
<line x1="570" y1="510.2" x2="575" y2="510.2" stroke="#a0a0a0" stroke-width="1.2"/>
<text x="567.7" y="515.2" font-size="14" fill="#d6d6d6" text-anchor="end" textLength="11.83" lengthAdjust="spacingAndGlyphs" stroke="#d6d6d6" stroke-width=".22">-4</text>
<rect x="575" y="154.2" width="161.6" height="356" fill="none" stroke="#a0a0a0" stroke-width="1.3"/>
<text x="645.3" y="148.7" font-size="15.2" fill="#cfcfcf" text-anchor="middle" textLength="43.94" lengthAdjust="spacingAndGlyphs" stroke="#cfcfcf" stroke-width=".22">DeltaL</text>
<rect x="590.3" y="324.4" width="128.1" height="7.8" fill="url(#a64)" stroke="#000" stroke-width="1.4"/>
<rect x="784" y="154.2" width="161.6" height="356" fill="#222222"/>
<line x1="779" y1="154.2" x2="784" y2="154.2" stroke="#a0a0a0" stroke-width="1.2"/>
<text x="776.7" y="159.2" font-size="14" fill="#d6d6d6" text-anchor="end" textLength="7.4" lengthAdjust="spacingAndGlyphs" stroke="#d6d6d6" stroke-width=".22">4</text>
<line x1="784" y1="198.7" x2="945.6" y2="198.7" stroke="#8e8e8e" stroke-width="1.2"/>
<line x1="779" y1="198.7" x2="784" y2="198.7" stroke="#a0a0a0" stroke-width="1.2"/>
<text x="776.7" y="203.7" font-size="14" fill="#d6d6d6" text-anchor="end" textLength="7.4" lengthAdjust="spacingAndGlyphs" stroke="#d6d6d6" stroke-width=".22">3</text>
<line x1="784" y1="243.2" x2="945.6" y2="243.2" stroke="#8e8e8e" stroke-width="1.2"/>
<line x1="779" y1="243.2" x2="784" y2="243.2" stroke="#a0a0a0" stroke-width="1.2"/>
<text x="776.7" y="248.2" font-size="14" fill="#d6d6d6" text-anchor="end" textLength="7.4" lengthAdjust="spacingAndGlyphs" stroke="#d6d6d6" stroke-width=".22">2</text>
<line x1="784" y1="287.7" x2="945.6" y2="287.7" stroke="#8e8e8e" stroke-width="1.2"/>
<line x1="779" y1="287.7" x2="784" y2="287.7" stroke="#a0a0a0" stroke-width="1.2"/>
<text x="776.7" y="292.7" font-size="14" fill="#d6d6d6" text-anchor="end" textLength="7.4" lengthAdjust="spacingAndGlyphs" stroke="#d6d6d6" stroke-width=".22">1</text>
<line x1="784" y1="332.2" x2="945.6" y2="332.2" stroke="#8e8e8e" stroke-width="1.2"/>
<line x1="779" y1="332.2" x2="784" y2="332.2" stroke="#a0a0a0" stroke-width="1.2"/>
<text x="776.7" y="337.2" font-size="14" fill="#d6d6d6" text-anchor="end" textLength="7.4" lengthAdjust="spacingAndGlyphs" stroke="#d6d6d6" stroke-width=".22">0</text>
<line x1="784" y1="376.7" x2="945.6" y2="376.7" stroke="#8e8e8e" stroke-width="1.2"/>
<line x1="779" y1="376.7" x2="784" y2="376.7" stroke="#a0a0a0" stroke-width="1.2"/>
<text x="776.7" y="381.7" font-size="14" fill="#d6d6d6" text-anchor="end" textLength="11.83" lengthAdjust="spacingAndGlyphs" stroke="#d6d6d6" stroke-width=".22">-1</text>
<line x1="784" y1="421.2" x2="945.6" y2="421.2" stroke="#8e8e8e" stroke-width="1.2"/>
<line x1="779" y1="421.2" x2="784" y2="421.2" stroke="#a0a0a0" stroke-width="1.2"/>
<text x="776.7" y="426.2" font-size="14" fill="#d6d6d6" text-anchor="end" textLength="11.83" lengthAdjust="spacingAndGlyphs" stroke="#d6d6d6" stroke-width=".22">-2</text>
<line x1="784" y1="465.7" x2="945.6" y2="465.7" stroke="#8e8e8e" stroke-width="1.2"/>
<line x1="779" y1="465.7" x2="784" y2="465.7" stroke="#a0a0a0" stroke-width="1.2"/>
<text x="776.7" y="470.7" font-size="14" fill="#d6d6d6" text-anchor="end" textLength="11.83" lengthAdjust="spacingAndGlyphs" stroke="#d6d6d6" stroke-width=".22">-3</text>
<line x1="779" y1="510.2" x2="784" y2="510.2" stroke="#a0a0a0" stroke-width="1.2"/>
<text x="776.7" y="515.2" font-size="14" fill="#d6d6d6" text-anchor="end" textLength="11.83" lengthAdjust="spacingAndGlyphs" stroke="#d6d6d6" stroke-width=".22">-4</text>
<rect x="784" y="154.2" width="161.6" height="356" fill="none" stroke="#a0a0a0" stroke-width="1.3"/>
<text x="854.6" y="148.7" font-size="15.2" fill="#cfcfcf" text-anchor="middle" textLength="46.46" lengthAdjust="spacingAndGlyphs" stroke="#cfcfcf" stroke-width=".22">DeltaC</text>
<rect x="799.4" y="319.8" width="128.9" height="12.4" fill="url(#a65)" stroke="#000" stroke-width="1.4"/>
<rect x="993" y="154.2" width="162" height="356" fill="#222222"/>
<line x1="988" y1="154.2" x2="993" y2="154.2" stroke="#a0a0a0" stroke-width="1.2"/>
<text x="985.7" y="159.2" font-size="14" fill="#d6d6d6" text-anchor="end" textLength="7.4" lengthAdjust="spacingAndGlyphs" stroke="#d6d6d6" stroke-width=".22">4</text>
<line x1="993" y1="198.7" x2="1155" y2="198.7" stroke="#8e8e8e" stroke-width="1.2"/>
<line x1="988" y1="198.7" x2="993" y2="198.7" stroke="#a0a0a0" stroke-width="1.2"/>
<text x="985.7" y="203.7" font-size="14" fill="#d6d6d6" text-anchor="end" textLength="7.4" lengthAdjust="spacingAndGlyphs" stroke="#d6d6d6" stroke-width=".22">3</text>
<line x1="993" y1="243.2" x2="1155" y2="243.2" stroke="#8e8e8e" stroke-width="1.2"/>
<line x1="988" y1="243.2" x2="993" y2="243.2" stroke="#a0a0a0" stroke-width="1.2"/>
<text x="985.7" y="248.2" font-size="14" fill="#d6d6d6" text-anchor="end" textLength="7.4" lengthAdjust="spacingAndGlyphs" stroke="#d6d6d6" stroke-width=".22">2</text>
<line x1="993" y1="287.7" x2="1155" y2="287.7" stroke="#8e8e8e" stroke-width="1.2"/>
<line x1="988" y1="287.7" x2="993" y2="287.7" stroke="#a0a0a0" stroke-width="1.2"/>
<text x="985.7" y="292.7" font-size="14" fill="#d6d6d6" text-anchor="end" textLength="7.4" lengthAdjust="spacingAndGlyphs" stroke="#d6d6d6" stroke-width=".22">1</text>
<line x1="993" y1="332.2" x2="1155" y2="332.2" stroke="#8e8e8e" stroke-width="1.2"/>
<line x1="988" y1="332.2" x2="993" y2="332.2" stroke="#a0a0a0" stroke-width="1.2"/>
<text x="985.7" y="337.2" font-size="14" fill="#d6d6d6" text-anchor="end" textLength="7.4" lengthAdjust="spacingAndGlyphs" stroke="#d6d6d6" stroke-width=".22">0</text>
<line x1="993" y1="376.7" x2="1155" y2="376.7" stroke="#8e8e8e" stroke-width="1.2"/>
<line x1="988" y1="376.7" x2="993" y2="376.7" stroke="#a0a0a0" stroke-width="1.2"/>
<text x="985.7" y="381.7" font-size="14" fill="#d6d6d6" text-anchor="end" textLength="11.83" lengthAdjust="spacingAndGlyphs" stroke="#d6d6d6" stroke-width=".22">-1</text>
<line x1="993" y1="421.2" x2="1155" y2="421.2" stroke="#8e8e8e" stroke-width="1.2"/>
<line x1="988" y1="421.2" x2="993" y2="421.2" stroke="#a0a0a0" stroke-width="1.2"/>
<text x="985.7" y="426.2" font-size="14" fill="#d6d6d6" text-anchor="end" textLength="11.83" lengthAdjust="spacingAndGlyphs" stroke="#d6d6d6" stroke-width=".22">-2</text>
<line x1="993" y1="465.7" x2="1155" y2="465.7" stroke="#8e8e8e" stroke-width="1.2"/>
<line x1="988" y1="465.7" x2="993" y2="465.7" stroke="#a0a0a0" stroke-width="1.2"/>
<text x="985.7" y="470.7" font-size="14" fill="#d6d6d6" text-anchor="end" textLength="11.83" lengthAdjust="spacingAndGlyphs" stroke="#d6d6d6" stroke-width=".22">-3</text>
<line x1="988" y1="510.2" x2="993" y2="510.2" stroke="#a0a0a0" stroke-width="1.2"/>
<text x="985.7" y="515.2" font-size="14" fill="#d6d6d6" text-anchor="end" textLength="11.83" lengthAdjust="spacingAndGlyphs" stroke="#d6d6d6" stroke-width=".22">-4</text>
<rect x="993" y="154.2" width="162" height="356" fill="none" stroke="#a0a0a0" stroke-width="1.3"/>
<text x="1063.6" y="148.7" font-size="15.2" fill="#cfcfcf" text-anchor="middle" textLength="46.46" lengthAdjust="spacingAndGlyphs" stroke="#cfcfcf" stroke-width=".22">DeltaH</text>
<rect x="1008.4" y="299.4" width="129" height="32.8" fill="url(#a66)" stroke="#000" stroke-width="1.4"/>
<rect x="548" y="525" width="627.5" height="170" fill="#000"/>
<g clip-path="url(#swc)">
<rect x="566.1" y="531.2" width="62.4" height="125.2" fill="#fdfdfb"/>
<rect x="566.1" y="593.8" width="62.4" height="62.6" fill="#ffffff"/>
<rect x="566.1" y="531.2" width="62.4" height="125.2" fill="none" stroke="#f0f0f0" stroke-width="1.1"/>
<text x="597.3" y="671.4" font-size="13.6" fill="#fff" text-anchor="middle" textLength="33.37" lengthAdjust="spacingAndGlyphs">White</text>
<rect x="638.25" y="531.2" width="62.4" height="125.2" fill="#e6e6e4"/>
<rect x="638.25" y="593.8" width="62.4" height="62.6" fill="#e6e6e6"/>
<rect x="638.25" y="531.2" width="62.4" height="125.2" fill="none" stroke="#f0f0f0" stroke-width="1.1"/>
<text x="669.45" y="671.4" font-size="13.6" fill="#fff" text-anchor="middle" textLength="46.44" lengthAdjust="spacingAndGlyphs">Gray 80</text>
<rect x="710.4" y="531.2" width="62.4" height="125.2" fill="#d2d2d0"/>
<rect x="710.4" y="593.8" width="62.4" height="62.6" fill="#d1d1d1"/>
<rect x="710.4" y="531.2" width="62.4" height="125.2" fill="none" stroke="#f0f0f0" stroke-width="1.1"/>
<text x="741.6" y="671.4" font-size="13.6" fill="#fff" text-anchor="middle" textLength="46.44" lengthAdjust="spacingAndGlyphs">Gray 65</text>
<rect x="782.55" y="531.2" width="62.4" height="125.2" fill="#bbbbb9"/>
<rect x="782.55" y="593.8" width="62.4" height="62.6" fill="#b9b9b9"/>
<rect x="782.55" y="531.2" width="62.4" height="125.2" fill="none" stroke="#f0f0f0" stroke-width="1.1"/>
<text x="813.75" y="671.4" font-size="13.6" fill="#fff" text-anchor="middle" textLength="46.44" lengthAdjust="spacingAndGlyphs">Gray 50</text>
<rect x="854.7" y="531.2" width="62.4" height="125.2" fill="#a1a19f"/>
<rect x="854.7" y="593.8" width="62.4" height="62.6" fill="#9f9f9f"/>
<rect x="854.7" y="531.2" width="62.4" height="125.2" fill="none" stroke="#f0f0f0" stroke-width="1.1"/>
<text x="885.9" y="671.4" font-size="13.6" fill="#fff" text-anchor="middle" textLength="46.44" lengthAdjust="spacingAndGlyphs">Gray 35</text>
<rect x="926.85" y="531.2" width="62.4" height="125.2" fill="#030305"/>
<rect x="926.85" y="593.8" width="62.4" height="62.6" fill="#000000"/>
<rect x="926.85" y="531.2" width="62.4" height="125.2" fill="none" stroke="#f0f0f0" stroke-width="1.1"/>
<text x="958.05" y="671.4" font-size="13.6" fill="#fff" text-anchor="middle" textLength="31.93" lengthAdjust="spacingAndGlyphs">Black</text>
<rect x="999" y="531.2" width="62.4" height="125.2" fill="#735446"/>
<rect x="999" y="593.8" width="62.4" height="62.6" fill="#735244"/>
<rect x="999" y="531.2" width="62.4" height="125.2" fill="none" stroke="#f0f0f0" stroke-width="1.1"/>
<text x="1030.2" y="671.4" font-size="13.6" fill="#fff" text-anchor="middle" textLength="56.59" lengthAdjust="spacingAndGlyphs">Dark Skin</text>
<rect x="1071.15" y="531.2" width="62.4" height="125.2" fill="#c39783"/>
<rect x="1071.15" y="593.8" width="62.4" height="62.6" fill="#c29682"/>
<rect x="1071.15" y="531.2" width="62.4" height="125.2" fill="none" stroke="#f0f0f0" stroke-width="1.1"/>
<text x="1102.35" y="671.4" font-size="13.6" fill="#fff" text-anchor="middle" textLength="57.34" lengthAdjust="spacingAndGlyphs">Light Skin</text>
<rect x="1143.3" y="531.2" width="62.4" height="125.2" fill="#5f7b9f"/>
<rect x="1143.3" y="593.8" width="62.4" height="62.6" fill="#627a9d"/>
<rect x="1143.3" y="531.2" width="62.4" height="125.2" fill="none" stroke="#f0f0f0" stroke-width="1.1"/>
<text x="1174.5" y="671.4" font-size="13.6" fill="#fff" text-anchor="middle" textLength="51.52" lengthAdjust="spacingAndGlyphs">Blue Sky</text>
</g>
<text transform="translate(561.5 559) rotate(-90)" font-size="13.4" fill="#fff" text-anchor="middle" textLength="37" lengthAdjust="spacingAndGlyphs">Actual</text>
<text transform="translate(561.5 629) rotate(-90)" font-size="13.4" fill="#fff" text-anchor="middle" textLength="36" lengthAdjust="spacingAndGlyphs">Target</text>
<rect x="548" y="695" width="627.5" height="17" fill="#646464"/>
<rect x="566.3" y="696.2" width="106.2" height="14.4" fill="#444444" rx="5"/>
<rect x="548.7" y="696.2" width="15.5" height="14.6" fill="#909090" rx="2.5"/>
<rect x="1159.3" y="696.2" width="15.5" height="14.6" fill="#909090" rx="2.5"/>
<path d="M553.1 703.5 l6.12 -4.76 v9.52 z" fill="#333"/>
<path d="M1170.4 703.5 l-6.12 -4.76 v9.52 z" fill="#333"/>
<text x="204.2" y="745.7" font-size="29.9" fill="#fff" textLength="246.4" lengthAdjust="spacingAndGlyphs">Avg dE2000: 0.61</text>
<text x="199.8" y="788.7" font-size="29.9" fill="#fff" textLength="256.6" lengthAdjust="spacingAndGlyphs">Max dE2000: 2.54</text>
<text x="165.9" y="838.8" font-size="28.4" fill="#fff" textLength="231.9" lengthAdjust="spacingAndGlyphs">Current Reading</text>
<text x="165.9" y="876.7" font-size="24.6" fill="#fff" textLength="108.7" lengthAdjust="spacingAndGlyphs">x: 0.4476</text>
<text x="331.8" y="876.7" font-size="24.6" fill="#fff" textLength="108.7" lengthAdjust="spacingAndGlyphs">y: 0.3855</text>
<text x="165.9" y="920" font-size="24.6" fill="#fff" textLength="101.6" lengthAdjust="spacingAndGlyphs">fL: 39.83</text>
<text x="165.9" y="956.6" font-size="24.6" fill="#fff" textLength="168.6" lengthAdjust="spacingAndGlyphs">cd/m²: 136.47</text>
<rect x="1183" y="120" width="737" height="592" fill="#1c1c1c"/>
<rect x="1190" y="127" width="722" height="578" fill="#333333"/>
<rect x="1229" y="151" width="680" height="525" fill="#a0a0a0"/>
<rect x="1231" y="153" width="677" height="522" fill="#222222"/>
<text x="1550.8" y="146" font-size="15.6" fill="#cfcfcf" text-anchor="middle" textLength="88.8" lengthAdjust="spacingAndGlyphs" stroke="#cfcfcf" stroke-width=".22">CIE 1976 u'v'</text>
<line x1="1224" y1="675" x2="1229" y2="675" stroke="#a0a0a0" stroke-width="1.2"/>
<text x="1222.6" y="680" font-size="14.4" fill="#d6d6d6" text-anchor="end" textLength="8.49" lengthAdjust="spacingAndGlyphs" stroke="#d6d6d6" stroke-width=".2">0</text>
<line x1="1230" y1="676" x2="1230" y2="681" stroke="#a0a0a0" stroke-width="1.2"/>
<text x="1230" y="696.6" font-size="14.4" fill="#d6d6d6" text-anchor="middle" textLength="8.49" lengthAdjust="spacingAndGlyphs" stroke="#d6d6d6" stroke-width=".2">0</text>
<line x1="1224" y1="631.59" x2="1229" y2="631.59" stroke="#a0a0a0" stroke-width="1.2"/>
<text x="1222.6" y="636.59" font-size="14.4" fill="#d6d6d6" text-anchor="end" textLength="29.71" lengthAdjust="spacingAndGlyphs" stroke="#d6d6d6" stroke-width=".2">0.05</text>
<line x1="1286.42" y1="676" x2="1286.42" y2="681" stroke="#a0a0a0" stroke-width="1.2"/>
<text x="1286.42" y="696.6" font-size="14.4" fill="#d6d6d6" text-anchor="middle" textLength="29.71" lengthAdjust="spacingAndGlyphs" stroke="#d6d6d6" stroke-width=".2">0.05</text>
<line x1="1224" y1="588.18" x2="1229" y2="588.18" stroke="#a0a0a0" stroke-width="1.2"/>
<text x="1222.6" y="593.18" font-size="14.4" fill="#d6d6d6" text-anchor="end" textLength="21.22" lengthAdjust="spacingAndGlyphs" stroke="#d6d6d6" stroke-width=".2">0.1</text>
<line x1="1342.85" y1="676" x2="1342.85" y2="681" stroke="#a0a0a0" stroke-width="1.2"/>
<text x="1342.85" y="696.6" font-size="14.4" fill="#d6d6d6" text-anchor="middle" textLength="21.22" lengthAdjust="spacingAndGlyphs" stroke="#d6d6d6" stroke-width=".2">0.1</text>
<line x1="1224" y1="544.77" x2="1229" y2="544.77" stroke="#a0a0a0" stroke-width="1.2"/>
<text x="1222.6" y="549.77" font-size="14.4" fill="#d6d6d6" text-anchor="end" textLength="29.71" lengthAdjust="spacingAndGlyphs" stroke="#d6d6d6" stroke-width=".2">0.15</text>
<line x1="1399.28" y1="676" x2="1399.28" y2="681" stroke="#a0a0a0" stroke-width="1.2"/>
<text x="1399.28" y="696.6" font-size="14.4" fill="#d6d6d6" text-anchor="middle" textLength="29.71" lengthAdjust="spacingAndGlyphs" stroke="#d6d6d6" stroke-width=".2">0.15</text>
<line x1="1224" y1="501.36" x2="1229" y2="501.36" stroke="#a0a0a0" stroke-width="1.2"/>
<text x="1222.6" y="506.36" font-size="14.4" fill="#d6d6d6" text-anchor="end" textLength="21.22" lengthAdjust="spacingAndGlyphs" stroke="#d6d6d6" stroke-width=".2">0.2</text>
<line x1="1455.7" y1="676" x2="1455.7" y2="681" stroke="#a0a0a0" stroke-width="1.2"/>
<text x="1455.7" y="696.6" font-size="14.4" fill="#d6d6d6" text-anchor="middle" textLength="21.22" lengthAdjust="spacingAndGlyphs" stroke="#d6d6d6" stroke-width=".2">0.2</text>
<line x1="1224" y1="457.95" x2="1229" y2="457.95" stroke="#a0a0a0" stroke-width="1.2"/>
<text x="1222.6" y="462.95" font-size="14.4" fill="#d6d6d6" text-anchor="end" textLength="29.71" lengthAdjust="spacingAndGlyphs" stroke="#d6d6d6" stroke-width=".2">0.25</text>
<line x1="1512.12" y1="676" x2="1512.12" y2="681" stroke="#a0a0a0" stroke-width="1.2"/>
<text x="1512.12" y="696.6" font-size="14.4" fill="#d6d6d6" text-anchor="middle" textLength="29.71" lengthAdjust="spacingAndGlyphs" stroke="#d6d6d6" stroke-width=".2">0.25</text>
<line x1="1224" y1="414.54" x2="1229" y2="414.54" stroke="#a0a0a0" stroke-width="1.2"/>
<text x="1222.6" y="419.54" font-size="14.4" fill="#d6d6d6" text-anchor="end" textLength="21.22" lengthAdjust="spacingAndGlyphs" stroke="#d6d6d6" stroke-width=".2">0.3</text>
<line x1="1568.55" y1="676" x2="1568.55" y2="681" stroke="#a0a0a0" stroke-width="1.2"/>
<text x="1568.55" y="696.6" font-size="14.4" fill="#d6d6d6" text-anchor="middle" textLength="21.22" lengthAdjust="spacingAndGlyphs" stroke="#d6d6d6" stroke-width=".2">0.3</text>
<line x1="1224" y1="371.13" x2="1229" y2="371.13" stroke="#a0a0a0" stroke-width="1.2"/>
<text x="1222.6" y="376.13" font-size="14.4" fill="#d6d6d6" text-anchor="end" textLength="29.71" lengthAdjust="spacingAndGlyphs" stroke="#d6d6d6" stroke-width=".2">0.35</text>
<line x1="1624.97" y1="676" x2="1624.97" y2="681" stroke="#a0a0a0" stroke-width="1.2"/>
<text x="1624.97" y="696.6" font-size="14.4" fill="#d6d6d6" text-anchor="middle" textLength="29.71" lengthAdjust="spacingAndGlyphs" stroke="#d6d6d6" stroke-width=".2">0.35</text>
<line x1="1224" y1="327.72" x2="1229" y2="327.72" stroke="#a0a0a0" stroke-width="1.2"/>
<text x="1222.6" y="332.72" font-size="14.4" fill="#d6d6d6" text-anchor="end" textLength="21.22" lengthAdjust="spacingAndGlyphs" stroke="#d6d6d6" stroke-width=".2">0.4</text>
<line x1="1681.4" y1="676" x2="1681.4" y2="681" stroke="#a0a0a0" stroke-width="1.2"/>
<text x="1681.4" y="696.6" font-size="14.4" fill="#d6d6d6" text-anchor="middle" textLength="21.22" lengthAdjust="spacingAndGlyphs" stroke="#d6d6d6" stroke-width=".2">0.4</text>
<line x1="1224" y1="284.31" x2="1229" y2="284.31" stroke="#a0a0a0" stroke-width="1.2"/>
<text x="1222.6" y="289.31" font-size="14.4" fill="#d6d6d6" text-anchor="end" textLength="29.71" lengthAdjust="spacingAndGlyphs" stroke="#d6d6d6" stroke-width=".2">0.45</text>
<line x1="1737.83" y1="676" x2="1737.83" y2="681" stroke="#a0a0a0" stroke-width="1.2"/>
<text x="1737.83" y="696.6" font-size="14.4" fill="#d6d6d6" text-anchor="middle" textLength="29.71" lengthAdjust="spacingAndGlyphs" stroke="#d6d6d6" stroke-width=".2">0.45</text>
<line x1="1224" y1="240.9" x2="1229" y2="240.9" stroke="#a0a0a0" stroke-width="1.2"/>
<text x="1222.6" y="245.9" font-size="14.4" fill="#d6d6d6" text-anchor="end" textLength="21.22" lengthAdjust="spacingAndGlyphs" stroke="#d6d6d6" stroke-width=".2">0.5</text>
<line x1="1794.25" y1="676" x2="1794.25" y2="681" stroke="#a0a0a0" stroke-width="1.2"/>
<text x="1794.25" y="696.6" font-size="14.4" fill="#d6d6d6" text-anchor="middle" textLength="21.22" lengthAdjust="spacingAndGlyphs" stroke="#d6d6d6" stroke-width=".2">0.5</text>
<line x1="1224" y1="197.49" x2="1229" y2="197.49" stroke="#a0a0a0" stroke-width="1.2"/>
<text x="1222.6" y="202.49" font-size="14.4" fill="#d6d6d6" text-anchor="end" textLength="29.71" lengthAdjust="spacingAndGlyphs" stroke="#d6d6d6" stroke-width=".2">0.55</text>
<line x1="1850.68" y1="676" x2="1850.68" y2="681" stroke="#a0a0a0" stroke-width="1.2"/>
<text x="1850.68" y="696.6" font-size="14.4" fill="#d6d6d6" text-anchor="middle" textLength="29.71" lengthAdjust="spacingAndGlyphs" stroke="#d6d6d6" stroke-width=".2">0.55</text>
<rect x="491.3" y="727.8" width="1429" height="27" fill="url(#a67)"/>
<rect x="491.3" y="727.8" width="9.7" height="27" fill="#000"/>
<g clip-path="url(#tbc)">
<rect x="501" y="754.8" width="1419" height="24.82" fill="#424242"/>
<rect x="491.3" y="754.8" width="9.7" height="24.82" fill="url(#a68)"/>
<rect x="501" y="779.42" width="1419" height="24.82" fill="#808080"/>
<rect x="491.3" y="779.42" width="9.7" height="24.82" fill="url(#a69)"/>
<rect x="501" y="804.04" width="1419" height="24.82" fill="#424242"/>
<rect x="491.3" y="804.04" width="9.7" height="24.82" fill="url(#a70)"/>
<rect x="501" y="828.66" width="1419" height="24.82" fill="#808080"/>
<rect x="491.3" y="828.66" width="9.7" height="24.82" fill="url(#a71)"/>
<rect x="888.8" y="829.46" width="52" height="23.22" fill="#f4f4f4" stroke="#cfcfcf" stroke-width="1"/>
<rect x="501" y="853.28" width="1419" height="24.82" fill="#424242"/>
<rect x="491.3" y="853.28" width="9.7" height="24.82" fill="url(#a72)"/>
<rect x="501" y="877.9" width="1419" height="24.82" fill="#808080"/>
<rect x="491.3" y="877.9" width="9.7" height="24.82" fill="url(#a73)"/>
<rect x="501" y="902.52" width="1419" height="24.82" fill="#424242"/>
<rect x="491.3" y="902.52" width="9.7" height="24.82" fill="url(#a74)"/>
<rect x="501" y="927.14" width="1419" height="24.82" fill="#808080"/>
<rect x="491.3" y="927.14" width="9.7" height="24.82" fill="url(#a75)"/>
<g stroke="#fff" stroke-width=".3">
<text x="585.9" y="747" font-size="14.8" fill="#fff" textLength="27.62" lengthAdjust="spacingAndGlyphs">White</text>
<text x="628" y="747" font-size="14.8" fill="#fff" textLength="38.43" lengthAdjust="spacingAndGlyphs">Gray 80</text>
<text x="671.9" y="747" font-size="14.8" fill="#fff" textLength="38.43" lengthAdjust="spacingAndGlyphs">Gray 65</text>
<text x="715.7" y="747" font-size="14.8" fill="#fff" textLength="38.43" lengthAdjust="spacingAndGlyphs">Gray 50</text>
<text x="759.2" y="747" font-size="14.8" fill="#fff" textLength="38.43" lengthAdjust="spacingAndGlyphs">Gray 35</text>
<text x="803.5" y="747" font-size="14.8" fill="#fff" textLength="26.42" lengthAdjust="spacingAndGlyphs">Black</text>
<text x="839.1" y="747" font-size="14.8" fill="#fff" textLength="46.83" lengthAdjust="spacingAndGlyphs">Dark Skin</text>
<text x="891.2" y="747" font-size="14.8" fill="#fff" textLength="47.45" lengthAdjust="spacingAndGlyphs">Light Skin</text>
<text x="944.4" y="747" font-size="14.8" fill="#fff" textLength="42.64" lengthAdjust="spacingAndGlyphs">Blue Sky</text>
<text x="991.3" y="747" font-size="14.8" fill="#fff" textLength="35.44" lengthAdjust="spacingAndGlyphs">Foliage</text>
<text x="1032.2" y="747" font-size="14.8" fill="#fff" textLength="57.04" lengthAdjust="spacingAndGlyphs">Blue Flower</text>
<text x="1096.3" y="747" font-size="14.8" fill="#fff" textLength="62.46" lengthAdjust="spacingAndGlyphs">Bluish Green</text>
<text x="1164.9" y="747" font-size="14.8" fill="#fff" textLength="36.04" lengthAdjust="spacingAndGlyphs">Orange</text>
<text x="1207.5" y="747" font-size="14.8" fill="#fff" textLength="63.66" lengthAdjust="spacingAndGlyphs">Purplish Blue</text>
<text x="1278" y="747" font-size="14.8" fill="#fff" textLength="68.46" lengthAdjust="spacingAndGlyphs">Moderate Red</text>
<text x="1354.1" y="747" font-size="14.8" fill="#fff" textLength="31.23" lengthAdjust="spacingAndGlyphs">Purple</text>
<text x="1392.4" y="747" font-size="14.8" fill="#fff" textLength="63.86" lengthAdjust="spacingAndGlyphs">Yellow Green</text>
<text x="1462.8" y="747" font-size="14.8" fill="#fff" textLength="69.68" lengthAdjust="spacingAndGlyphs">Orange Yellow</text>
<text x="1539.3" y="747" font-size="14.8" fill="#fff" textLength="21.62" lengthAdjust="spacingAndGlyphs">Blue</text>
<text x="1575" y="747" font-size="14.8" fill="#fff" textLength="30.03" lengthAdjust="spacingAndGlyphs">Green</text>
<text x="1611.3" y="747" font-size="14.8" fill="#fff" textLength="19.82" lengthAdjust="spacingAndGlyphs">Red</text>
<text x="1647" y="747" font-size="14.8" fill="#fff" textLength="30.83" lengthAdjust="spacingAndGlyphs">Yellow</text>
<text x="1689.3" y="747" font-size="14.8" fill="#fff" textLength="42.05" lengthAdjust="spacingAndGlyphs">Magenta</text>
<text x="1739.2" y="747" font-size="14.8" fill="#fff" textLength="25.22" lengthAdjust="spacingAndGlyphs">Cyan</text>
<text x="1775.2" y="747" font-size="14.8" fill="#fff" textLength="50.45" lengthAdjust="spacingAndGlyphs">100% Red</text>
<text x="1830" y="747" font-size="14.8" fill="#fff" textLength="60.66" lengthAdjust="spacingAndGlyphs">100% Green</text>
<text x="1896" y="747" font-size="14.8" fill="#fff" textLength="52.26" lengthAdjust="spacingAndGlyphs">100% Blue</text>
<text x="504" y="772.7" font-size="14.8" fill="#fff" textLength="41.2" lengthAdjust="spacingAndGlyphs">x: CIE31</text>
<text x="585.9" y="772.7" font-size="14.8" fill="#fff" textLength="21.89" lengthAdjust="spacingAndGlyphs">0.31</text>
<text x="628" y="772.7" font-size="14.8" fill="#fff" textLength="21.89" lengthAdjust="spacingAndGlyphs">0.31</text>
<text x="671.9" y="772.7" font-size="14.8" fill="#fff" textLength="21.89" lengthAdjust="spacingAndGlyphs">0.31</text>
<text x="715.7" y="772.7" font-size="14.8" fill="#fff" textLength="21.89" lengthAdjust="spacingAndGlyphs">0.31</text>
<text x="759.2" y="772.7" font-size="14.8" fill="#fff" textLength="21.89" lengthAdjust="spacingAndGlyphs">0.31</text>
<text x="803.5" y="772.7" font-size="14.8" fill="#fff" textLength="21.89" lengthAdjust="spacingAndGlyphs">0.26</text>
<text x="839.1" y="772.7" font-size="14.8" fill="#fff" textLength="21.89" lengthAdjust="spacingAndGlyphs">0.40</text>
<text x="891.2" y="772.7" font-size="14.8" fill="#fff" textLength="21.89" lengthAdjust="spacingAndGlyphs">0.38</text>
<text x="944.4" y="772.7" font-size="14.8" fill="#fff" textLength="21.89" lengthAdjust="spacingAndGlyphs">0.25</text>
<text x="991.3" y="772.7" font-size="14.8" fill="#fff" textLength="21.89" lengthAdjust="spacingAndGlyphs">0.34</text>
<text x="1032.2" y="772.7" font-size="14.8" fill="#fff" textLength="21.89" lengthAdjust="spacingAndGlyphs">0.27</text>
<text x="1096.3" y="772.7" font-size="14.8" fill="#fff" textLength="21.89" lengthAdjust="spacingAndGlyphs">0.26</text>
<text x="1164.9" y="772.7" font-size="14.8" fill="#fff" textLength="21.89" lengthAdjust="spacingAndGlyphs">0.51</text>
<text x="1207.5" y="772.7" font-size="14.8" fill="#fff" textLength="21.89" lengthAdjust="spacingAndGlyphs">0.22</text>
<text x="1278" y="772.7" font-size="14.8" fill="#fff" textLength="21.89" lengthAdjust="spacingAndGlyphs">0.46</text>
<text x="1354.1" y="772.7" font-size="14.8" fill="#fff" textLength="21.89" lengthAdjust="spacingAndGlyphs">0.28</text>
<text x="1392.4" y="772.7" font-size="14.8" fill="#fff" textLength="21.89" lengthAdjust="spacingAndGlyphs">0.38</text>
<text x="1462.8" y="772.7" font-size="14.8" fill="#fff" textLength="21.89" lengthAdjust="spacingAndGlyphs">0.47</text>
<text x="1539.3" y="772.7" font-size="14.8" fill="#fff" textLength="21.89" lengthAdjust="spacingAndGlyphs">0.19</text>
<text x="1575" y="772.7" font-size="14.8" fill="#fff" textLength="21.89" lengthAdjust="spacingAndGlyphs">0.30</text>
<text x="1611.3" y="772.7" font-size="14.8" fill="#fff" textLength="21.89" lengthAdjust="spacingAndGlyphs">0.53</text>
<text x="1647" y="772.7" font-size="14.8" fill="#fff" textLength="21.89" lengthAdjust="spacingAndGlyphs">0.45</text>
<text x="1689.3" y="772.7" font-size="14.8" fill="#fff" textLength="21.89" lengthAdjust="spacingAndGlyphs">0.37</text>
<text x="1739.2" y="772.7" font-size="14.8" fill="#fff" textLength="21.89" lengthAdjust="spacingAndGlyphs">0.21</text>
<text x="1775.2" y="772.7" font-size="14.8" fill="#fff" textLength="21.89" lengthAdjust="spacingAndGlyphs">0.64</text>
<text x="1830" y="772.7" font-size="14.8" fill="#fff" textLength="21.89" lengthAdjust="spacingAndGlyphs">0.30</text>
<text x="1896" y="772.7" font-size="14.8" fill="#fff" textLength="21.89" lengthAdjust="spacingAndGlyphs">0.15</text>
<text x="504" y="797.32" font-size="14.8" fill="#fff" textLength="41.2" lengthAdjust="spacingAndGlyphs">y: CIE31</text>
<text x="585.9" y="797.32" font-size="14.8" fill="#fff" textLength="21.89" lengthAdjust="spacingAndGlyphs">0.33</text>
<text x="628" y="797.32" font-size="14.8" fill="#fff" textLength="21.89" lengthAdjust="spacingAndGlyphs">0.33</text>
<text x="671.9" y="797.32" font-size="14.8" fill="#fff" textLength="21.89" lengthAdjust="spacingAndGlyphs">0.33</text>
<text x="715.7" y="797.32" font-size="14.8" fill="#fff" textLength="21.89" lengthAdjust="spacingAndGlyphs">0.33</text>
<text x="759.2" y="797.32" font-size="14.8" fill="#fff" textLength="21.89" lengthAdjust="spacingAndGlyphs">0.33</text>
<text x="803.5" y="797.32" font-size="14.8" fill="#fff" textLength="21.89" lengthAdjust="spacingAndGlyphs">0.27</text>
<text x="839.1" y="797.32" font-size="14.8" fill="#fff" textLength="21.89" lengthAdjust="spacingAndGlyphs">0.36</text>
<text x="891.2" y="797.32" font-size="14.8" fill="#fff" textLength="21.89" lengthAdjust="spacingAndGlyphs">0.36</text>
<text x="944.4" y="797.32" font-size="14.8" fill="#fff" textLength="21.89" lengthAdjust="spacingAndGlyphs">0.27</text>
<text x="991.3" y="797.32" font-size="14.8" fill="#fff" textLength="21.89" lengthAdjust="spacingAndGlyphs">0.42</text>
<text x="1032.2" y="797.32" font-size="14.8" fill="#fff" textLength="21.89" lengthAdjust="spacingAndGlyphs">0.25</text>
<text x="1096.3" y="797.32" font-size="14.8" fill="#fff" textLength="21.89" lengthAdjust="spacingAndGlyphs">0.36</text>
<text x="1164.9" y="797.32" font-size="14.8" fill="#fff" textLength="21.89" lengthAdjust="spacingAndGlyphs">0.41</text>
<text x="1207.5" y="797.32" font-size="14.8" fill="#fff" textLength="21.89" lengthAdjust="spacingAndGlyphs">0.19</text>
<text x="1278" y="797.32" font-size="14.8" fill="#fff" textLength="21.89" lengthAdjust="spacingAndGlyphs">0.31</text>
<text x="1354.1" y="797.32" font-size="14.8" fill="#fff" textLength="21.89" lengthAdjust="spacingAndGlyphs">0.22</text>
<text x="1392.4" y="797.32" font-size="14.8" fill="#fff" textLength="21.89" lengthAdjust="spacingAndGlyphs">0.49</text>
<text x="1462.8" y="797.32" font-size="14.8" fill="#fff" textLength="21.89" lengthAdjust="spacingAndGlyphs">0.44</text>
<text x="1539.3" y="797.32" font-size="14.8" fill="#fff" textLength="21.89" lengthAdjust="spacingAndGlyphs">0.14</text>
<text x="1575" y="797.32" font-size="14.8" fill="#fff" textLength="21.89" lengthAdjust="spacingAndGlyphs">0.49</text>
<text x="1611.3" y="797.32" font-size="14.8" fill="#fff" textLength="21.89" lengthAdjust="spacingAndGlyphs">0.32</text>
<text x="1647" y="797.32" font-size="14.8" fill="#fff" textLength="21.89" lengthAdjust="spacingAndGlyphs">0.47</text>
<text x="1689.3" y="797.32" font-size="14.8" fill="#fff" textLength="21.89" lengthAdjust="spacingAndGlyphs">0.25</text>
<text x="1739.2" y="797.32" font-size="14.8" fill="#fff" textLength="21.89" lengthAdjust="spacingAndGlyphs">0.27</text>
<text x="1775.2" y="797.32" font-size="14.8" fill="#fff" textLength="21.89" lengthAdjust="spacingAndGlyphs">0.33</text>
<text x="1830" y="797.32" font-size="14.8" fill="#fff" textLength="21.89" lengthAdjust="spacingAndGlyphs">0.60</text>
<text x="1896" y="797.32" font-size="14.8" fill="#fff" textLength="21.89" lengthAdjust="spacingAndGlyphs">0.07</text>
<text x="504" y="821.94" font-size="14.8" fill="#fff" textLength="6" lengthAdjust="spacingAndGlyphs">Y</text>
<text x="585.9" y="821.94" font-size="14.8" fill="#fff" textLength="34.4" lengthAdjust="spacingAndGlyphs">394.64</text>
<text x="628" y="821.94" font-size="14.8" fill="#fff" textLength="33.57" lengthAdjust="spacingAndGlyphs">311.51</text>
<text x="671.9" y="821.94" font-size="14.8" fill="#fff" textLength="34.4" lengthAdjust="spacingAndGlyphs">253.62</text>
<text x="715.7" y="821.94" font-size="14.8" fill="#fff" textLength="34.4" lengthAdjust="spacingAndGlyphs">193.63</text>
<text x="759.2" y="821.94" font-size="14.8" fill="#fff" textLength="34.4" lengthAdjust="spacingAndGlyphs">136.61</text>
<text x="803.5" y="821.94" font-size="14.8" fill="#fff" textLength="21.89" lengthAdjust="spacingAndGlyphs">0.26</text>
<text x="839.1" y="821.94" font-size="14.8" fill="#fff" textLength="28.15" lengthAdjust="spacingAndGlyphs">40.22</text>
<text x="891.2" y="821.94" font-size="14.8" fill="#fff" textLength="34.4" lengthAdjust="spacingAndGlyphs">138.16</text>
<text x="944.4" y="821.94" font-size="14.8" fill="#fff" textLength="28.15" lengthAdjust="spacingAndGlyphs">72.89</text>
<text x="991.3" y="821.94" font-size="14.8" fill="#fff" textLength="28.15" lengthAdjust="spacingAndGlyphs">51.81</text>
<text x="1032.2" y="821.94" font-size="14.8" fill="#fff" textLength="28.15" lengthAdjust="spacingAndGlyphs">91.06</text>
<text x="1096.3" y="821.94" font-size="14.8" fill="#fff" textLength="34.4" lengthAdjust="spacingAndGlyphs">164.77</text>
<text x="1164.9" y="821.94" font-size="14.8" fill="#fff" textLength="33.57" lengthAdjust="spacingAndGlyphs">112.41</text>
<text x="1207.5" y="821.94" font-size="14.8" fill="#fff" textLength="28.15" lengthAdjust="spacingAndGlyphs">46.69</text>
<text x="1278" y="821.94" font-size="14.8" fill="#fff" textLength="28.15" lengthAdjust="spacingAndGlyphs">73.85</text>
<text x="1354.1" y="821.94" font-size="14.8" fill="#fff" textLength="28.15" lengthAdjust="spacingAndGlyphs">24.96</text>
<text x="1392.4" y="821.94" font-size="14.8" fill="#fff" textLength="34.4" lengthAdjust="spacingAndGlyphs">168.85</text>
<text x="1462.8" y="821.94" font-size="14.8" fill="#fff" textLength="34.4" lengthAdjust="spacingAndGlyphs">168.87</text>
<text x="1539.3" y="821.94" font-size="14.8" fill="#fff" textLength="28.15" lengthAdjust="spacingAndGlyphs">25.37</text>
<text x="1575" y="821.94" font-size="14.8" fill="#fff" textLength="28.15" lengthAdjust="spacingAndGlyphs">91.64</text>
<text x="1611.3" y="821.94" font-size="14.8" fill="#fff" textLength="28.15" lengthAdjust="spacingAndGlyphs">46.33</text>
<text x="1647" y="821.94" font-size="14.8" fill="#fff" textLength="34.4" lengthAdjust="spacingAndGlyphs">233.50</text>
<text x="1689.3" y="821.94" font-size="14.8" fill="#fff" textLength="28.15" lengthAdjust="spacingAndGlyphs">74.47</text>
<text x="1739.2" y="821.94" font-size="14.8" fill="#fff" textLength="28.15" lengthAdjust="spacingAndGlyphs">76.38</text>
<text x="1775.2" y="821.94" font-size="14.8" fill="#fff" textLength="28.15" lengthAdjust="spacingAndGlyphs">83.43</text>
<text x="1830" y="821.94" font-size="14.8" fill="#fff" textLength="34.4" lengthAdjust="spacingAndGlyphs">280.83</text>
<text x="1896" y="821.94" font-size="14.8" fill="#fff" textLength="28.15" lengthAdjust="spacingAndGlyphs">32.60</text>
<text x="504" y="846.56" font-size="14.8" fill="#fff" textLength="74.1" lengthAdjust="spacingAndGlyphs">Target x:CIE31</text>
<text x="585.9" y="846.56" font-size="14.8" fill="#fff" textLength="21.89" lengthAdjust="spacingAndGlyphs">0.31</text>
<text x="628" y="846.56" font-size="14.8" fill="#fff" textLength="21.89" lengthAdjust="spacingAndGlyphs">0.31</text>
<text x="671.9" y="846.56" font-size="14.8" fill="#fff" textLength="21.89" lengthAdjust="spacingAndGlyphs">0.31</text>
<text x="715.7" y="846.56" font-size="14.8" fill="#fff" textLength="21.89" lengthAdjust="spacingAndGlyphs">0.31</text>
<text x="759.2" y="846.56" font-size="14.8" fill="#fff" textLength="21.89" lengthAdjust="spacingAndGlyphs">0.31</text>
<text x="803.5" y="846.56" font-size="14.8" fill="#fff" textLength="21.89" lengthAdjust="spacingAndGlyphs">0.31</text>
<text x="839.1" y="846.56" font-size="14.8" fill="#fff" textLength="21.89" lengthAdjust="spacingAndGlyphs">0.40</text>
<text x="891.2" y="846.56" font-size="14.8" fill="#222" textLength="21.89" lengthAdjust="spacingAndGlyphs" stroke="none">0.38</text>
<text x="944.4" y="846.56" font-size="14.8" fill="#fff" textLength="21.89" lengthAdjust="spacingAndGlyphs">0.25</text>
<text x="991.3" y="846.56" font-size="14.8" fill="#fff" textLength="21.89" lengthAdjust="spacingAndGlyphs">0.34</text>
<text x="1032.2" y="846.56" font-size="14.8" fill="#fff" textLength="21.89" lengthAdjust="spacingAndGlyphs">0.27</text>
<text x="1096.3" y="846.56" font-size="14.8" fill="#fff" textLength="21.89" lengthAdjust="spacingAndGlyphs">0.26</text>
<text x="1164.9" y="846.56" font-size="14.8" fill="#fff" textLength="21.89" lengthAdjust="spacingAndGlyphs">0.51</text>
<text x="1207.5" y="846.56" font-size="14.8" fill="#fff" textLength="21.89" lengthAdjust="spacingAndGlyphs">0.22</text>
<text x="1278" y="846.56" font-size="14.8" fill="#fff" textLength="21.89" lengthAdjust="spacingAndGlyphs">0.46</text>
<text x="1354.1" y="846.56" font-size="14.8" fill="#fff" textLength="21.89" lengthAdjust="spacingAndGlyphs">0.29</text>
<text x="1392.4" y="846.56" font-size="14.8" fill="#fff" textLength="21.89" lengthAdjust="spacingAndGlyphs">0.38</text>
<text x="1462.8" y="846.56" font-size="14.8" fill="#fff" textLength="21.89" lengthAdjust="spacingAndGlyphs">0.47</text>
<text x="1539.3" y="846.56" font-size="14.8" fill="#fff" textLength="21.89" lengthAdjust="spacingAndGlyphs">0.19</text>
<text x="1575" y="846.56" font-size="14.8" fill="#fff" textLength="21.89" lengthAdjust="spacingAndGlyphs">0.31</text>
<text x="1611.3" y="846.56" font-size="14.8" fill="#fff" textLength="21.89" lengthAdjust="spacingAndGlyphs">0.54</text>
<text x="1647" y="846.56" font-size="14.8" fill="#fff" textLength="21.89" lengthAdjust="spacingAndGlyphs">0.45</text>
<text x="1689.3" y="846.56" font-size="14.8" fill="#fff" textLength="21.89" lengthAdjust="spacingAndGlyphs">0.37</text>
<text x="1739.2" y="846.56" font-size="14.8" fill="#fff" textLength="21.89" lengthAdjust="spacingAndGlyphs">0.21</text>
<text x="1775.2" y="846.56" font-size="14.8" fill="#fff" textLength="21.89" lengthAdjust="spacingAndGlyphs">0.64</text>
<text x="1830" y="846.56" font-size="14.8" fill="#fff" textLength="21.89" lengthAdjust="spacingAndGlyphs">0.30</text>
<text x="1896" y="846.56" font-size="14.8" fill="#fff" textLength="21.89" lengthAdjust="spacingAndGlyphs">0.15</text>
<text x="504" y="871.18" font-size="14.8" fill="#fff" textLength="74.1" lengthAdjust="spacingAndGlyphs">Target y:CIE31</text>
<text x="585.9" y="871.18" font-size="14.8" fill="#fff" textLength="21.89" lengthAdjust="spacingAndGlyphs">0.33</text>
<text x="628" y="871.18" font-size="14.8" fill="#fff" textLength="21.89" lengthAdjust="spacingAndGlyphs">0.33</text>
<text x="671.9" y="871.18" font-size="14.8" fill="#fff" textLength="21.89" lengthAdjust="spacingAndGlyphs">0.33</text>
<text x="715.7" y="871.18" font-size="14.8" fill="#fff" textLength="21.89" lengthAdjust="spacingAndGlyphs">0.33</text>
<text x="759.2" y="871.18" font-size="14.8" fill="#fff" textLength="21.89" lengthAdjust="spacingAndGlyphs">0.33</text>
<text x="803.5" y="871.18" font-size="14.8" fill="#fff" textLength="21.89" lengthAdjust="spacingAndGlyphs">0.33</text>
<text x="839.1" y="871.18" font-size="14.8" fill="#fff" textLength="21.89" lengthAdjust="spacingAndGlyphs">0.36</text>
<text x="891.2" y="871.18" font-size="14.8" fill="#fff" textLength="21.89" lengthAdjust="spacingAndGlyphs">0.36</text>
<text x="944.4" y="871.18" font-size="14.8" fill="#fff" textLength="21.89" lengthAdjust="spacingAndGlyphs">0.27</text>
<text x="991.3" y="871.18" font-size="14.8" fill="#fff" textLength="21.89" lengthAdjust="spacingAndGlyphs">0.43</text>
<text x="1032.2" y="871.18" font-size="14.8" fill="#fff" textLength="21.89" lengthAdjust="spacingAndGlyphs">0.25</text>
<text x="1096.3" y="871.18" font-size="14.8" fill="#fff" textLength="21.89" lengthAdjust="spacingAndGlyphs">0.36</text>
<text x="1164.9" y="871.18" font-size="14.8" fill="#fff" textLength="21.89" lengthAdjust="spacingAndGlyphs">0.41</text>
<text x="1207.5" y="871.18" font-size="14.8" fill="#fff" textLength="21.89" lengthAdjust="spacingAndGlyphs">0.19</text>
<text x="1278" y="871.18" font-size="14.8" fill="#fff" textLength="21.89" lengthAdjust="spacingAndGlyphs">0.31</text>
<text x="1354.1" y="871.18" font-size="14.8" fill="#fff" textLength="21.89" lengthAdjust="spacingAndGlyphs">0.22</text>
<text x="1392.4" y="871.18" font-size="14.8" fill="#fff" textLength="21.89" lengthAdjust="spacingAndGlyphs">0.49</text>
<text x="1462.8" y="871.18" font-size="14.8" fill="#fff" textLength="21.89" lengthAdjust="spacingAndGlyphs">0.44</text>
<text x="1539.3" y="871.18" font-size="14.8" fill="#fff" textLength="21.89" lengthAdjust="spacingAndGlyphs">0.14</text>
<text x="1575" y="871.18" font-size="14.8" fill="#fff" textLength="21.89" lengthAdjust="spacingAndGlyphs">0.49</text>
<text x="1611.3" y="871.18" font-size="14.8" fill="#fff" textLength="21.89" lengthAdjust="spacingAndGlyphs">0.32</text>
<text x="1647" y="871.18" font-size="14.8" fill="#fff" textLength="21.89" lengthAdjust="spacingAndGlyphs">0.47</text>
<text x="1689.3" y="871.18" font-size="14.8" fill="#fff" textLength="21.89" lengthAdjust="spacingAndGlyphs">0.25</text>
<text x="1739.2" y="871.18" font-size="14.8" fill="#fff" textLength="21.89" lengthAdjust="spacingAndGlyphs">0.27</text>
<text x="1775.2" y="871.18" font-size="14.8" fill="#fff" textLength="21.89" lengthAdjust="spacingAndGlyphs">0.33</text>
<text x="1830" y="871.18" font-size="14.8" fill="#fff" textLength="21.89" lengthAdjust="spacingAndGlyphs">0.60</text>
<text x="1896" y="871.18" font-size="14.8" fill="#fff" textLength="21.89" lengthAdjust="spacingAndGlyphs">0.06</text>
<text x="504" y="895.8" font-size="14.8" fill="#fff" textLength="42.7" lengthAdjust="spacingAndGlyphs">Target Y</text>
<text x="585.9" y="895.8" font-size="14.8" fill="#fff" textLength="34.4" lengthAdjust="spacingAndGlyphs">394.64</text>
<text x="628" y="895.8" font-size="14.8" fill="#fff" textLength="34.4" lengthAdjust="spacingAndGlyphs">312.28</text>
<text x="671.9" y="895.8" font-size="14.8" fill="#fff" textLength="34.4" lengthAdjust="spacingAndGlyphs">251.62</text>
<text x="715.7" y="895.8" font-size="14.8" fill="#fff" textLength="34.4" lengthAdjust="spacingAndGlyphs">193.78</text>
<text x="759.2" y="895.8" font-size="14.8" fill="#fff" textLength="34.4" lengthAdjust="spacingAndGlyphs">134.93</text>
<text x="803.5" y="895.8" font-size="14.8" fill="#fff" textLength="21.89" lengthAdjust="spacingAndGlyphs">0.00</text>
<text x="839.1" y="895.8" font-size="14.8" fill="#fff" textLength="28.15" lengthAdjust="spacingAndGlyphs">39.75</text>
<text x="891.2" y="895.8" font-size="14.8" fill="#fff" textLength="34.4" lengthAdjust="spacingAndGlyphs">137.71</text>
<text x="944.4" y="895.8" font-size="14.8" fill="#fff" textLength="28.15" lengthAdjust="spacingAndGlyphs">73.79</text>
<text x="991.3" y="895.8" font-size="14.8" fill="#fff" textLength="28.15" lengthAdjust="spacingAndGlyphs">51.43</text>
<text x="1032.2" y="895.8" font-size="14.8" fill="#fff" textLength="28.15" lengthAdjust="spacingAndGlyphs">92.02</text>
<text x="1096.3" y="895.8" font-size="14.8" fill="#fff" textLength="34.4" lengthAdjust="spacingAndGlyphs">165.25</text>
<text x="1164.9" y="895.8" font-size="14.8" fill="#fff" textLength="32.73" lengthAdjust="spacingAndGlyphs">111.87</text>
<text x="1207.5" y="895.8" font-size="14.8" fill="#fff" textLength="28.15" lengthAdjust="spacingAndGlyphs">46.39</text>
<text x="1278" y="895.8" font-size="14.8" fill="#fff" textLength="28.15" lengthAdjust="spacingAndGlyphs">73.70</text>
<text x="1354.1" y="895.8" font-size="14.8" fill="#fff" textLength="28.15" lengthAdjust="spacingAndGlyphs">26.34</text>
<text x="1392.4" y="895.8" font-size="14.8" fill="#fff" textLength="34.4" lengthAdjust="spacingAndGlyphs">168.74</text>
<text x="1462.8" y="895.8" font-size="14.8" fill="#fff" textLength="34.4" lengthAdjust="spacingAndGlyphs">167.77</text>
<text x="1539.3" y="895.8" font-size="14.8" fill="#fff" textLength="28.15" lengthAdjust="spacingAndGlyphs">24.64</text>
<text x="1575" y="895.8" font-size="14.8" fill="#fff" textLength="28.15" lengthAdjust="spacingAndGlyphs">90.66</text>
<text x="1611.3" y="895.8" font-size="14.8" fill="#fff" textLength="28.15" lengthAdjust="spacingAndGlyphs">46.02</text>
<text x="1647" y="895.8" font-size="14.8" fill="#fff" textLength="34.4" lengthAdjust="spacingAndGlyphs">232.69</text>
<text x="1689.3" y="895.8" font-size="14.8" fill="#fff" textLength="28.15" lengthAdjust="spacingAndGlyphs">74.30</text>
<text x="1739.2" y="895.8" font-size="14.8" fill="#fff" textLength="28.15" lengthAdjust="spacingAndGlyphs">76.63</text>
<text x="1775.2" y="895.8" font-size="14.8" fill="#fff" textLength="28.15" lengthAdjust="spacingAndGlyphs">83.92</text>
<text x="1830" y="895.8" font-size="14.8" fill="#fff" textLength="34.4" lengthAdjust="spacingAndGlyphs">282.23</text>
<text x="1896" y="895.8" font-size="14.8" fill="#fff" textLength="28.15" lengthAdjust="spacingAndGlyphs">28.40</text>
<text x="504" y="920.42" font-size="14.8" fill="#fff" textLength="43.1" lengthAdjust="spacingAndGlyphs">ΔE 2000</text>
<text x="585.9" y="920.42" font-size="14.8" fill="#fff" textLength="21.89" lengthAdjust="spacingAndGlyphs">1.08</text>
<text x="628" y="920.42" font-size="14.8" fill="#fff" textLength="21.89" lengthAdjust="spacingAndGlyphs">0.92</text>
<text x="671.9" y="920.42" font-size="14.8" fill="#fff" textLength="21.89" lengthAdjust="spacingAndGlyphs">1.35</text>
<text x="715.7" y="920.42" font-size="14.8" fill="#fff" textLength="21.89" lengthAdjust="spacingAndGlyphs">0.57</text>
<text x="759.2" y="920.42" font-size="14.8" fill="#fff" textLength="21.89" lengthAdjust="spacingAndGlyphs">0.88</text>
<text x="803.5" y="920.42" font-size="14.8" fill="#fff" textLength="21.89" lengthAdjust="spacingAndGlyphs">0.71</text>
<text x="839.1" y="920.42" font-size="14.8" fill="#fff" textLength="21.89" lengthAdjust="spacingAndGlyphs">0.57</text>
<text x="891.2" y="920.42" font-size="14.8" fill="#fff" textLength="21.89" lengthAdjust="spacingAndGlyphs">0.67</text>
<text x="944.4" y="920.42" font-size="14.8" fill="#fff" textLength="21.89" lengthAdjust="spacingAndGlyphs">0.37</text>
<text x="991.3" y="920.42" font-size="14.8" fill="#fff" textLength="21.89" lengthAdjust="spacingAndGlyphs">0.48</text>
<text x="1032.2" y="920.42" font-size="14.8" fill="#fff" textLength="21.89" lengthAdjust="spacingAndGlyphs">0.47</text>
<text x="1096.3" y="920.42" font-size="14.8" fill="#fff" textLength="21.89" lengthAdjust="spacingAndGlyphs">0.58</text>
<text x="1164.9" y="920.42" font-size="14.8" fill="#fff" textLength="21.89" lengthAdjust="spacingAndGlyphs">0.14</text>
<text x="1207.5" y="920.42" font-size="14.8" fill="#fff" textLength="21.89" lengthAdjust="spacingAndGlyphs">0.28</text>
<text x="1278" y="920.42" font-size="14.8" fill="#fff" textLength="21.89" lengthAdjust="spacingAndGlyphs">0.23</text>
<text x="1354.1" y="920.42" font-size="14.8" fill="#fff" textLength="21.89" lengthAdjust="spacingAndGlyphs">2.54</text>
<text x="1392.4" y="920.42" font-size="14.8" fill="#fff" textLength="21.89" lengthAdjust="spacingAndGlyphs">0.09</text>
<text x="1462.8" y="920.42" font-size="14.8" fill="#fff" textLength="21.89" lengthAdjust="spacingAndGlyphs">0.15</text>
<text x="1539.3" y="920.42" font-size="14.8" fill="#fff" textLength="21.89" lengthAdjust="spacingAndGlyphs">0.46</text>
<text x="1575" y="920.42" font-size="14.8" fill="#fff" textLength="21.89" lengthAdjust="spacingAndGlyphs">0.40</text>
<text x="1611.3" y="920.42" font-size="14.8" fill="#fff" textLength="21.89" lengthAdjust="spacingAndGlyphs">0.26</text>
<text x="1647" y="920.42" font-size="14.8" fill="#fff" textLength="21.89" lengthAdjust="spacingAndGlyphs">0.18</text>
<text x="1689.3" y="920.42" font-size="14.8" fill="#fff" textLength="21.89" lengthAdjust="spacingAndGlyphs">0.15</text>
<text x="1739.2" y="920.42" font-size="14.8" fill="#fff" textLength="21.89" lengthAdjust="spacingAndGlyphs">0.31</text>
<text x="1775.2" y="920.42" font-size="14.8" fill="#fff" textLength="21.89" lengthAdjust="spacingAndGlyphs">0.25</text>
<text x="1830" y="920.42" font-size="14.8" fill="#fff" textLength="21.89" lengthAdjust="spacingAndGlyphs">0.34</text>
<text x="1896" y="920.42" font-size="14.8" fill="#fff" textLength="21.89" lengthAdjust="spacingAndGlyphs">2.51</text>
<text x="504" y="945.04" font-size="14.8" fill="#fff" textLength="28.9" lengthAdjust="spacingAndGlyphs">dEITP</text>
<text x="585.9" y="945.04" font-size="14.8" fill="#fff" textLength="21.89" lengthAdjust="spacingAndGlyphs">0.64</text>
<text x="628" y="945.04" font-size="14.8" fill="#fff" textLength="21.89" lengthAdjust="spacingAndGlyphs">0.91</text>
<text x="671.9" y="945.04" font-size="14.8" fill="#fff" textLength="21.89" lengthAdjust="spacingAndGlyphs">1.05</text>
<text x="715.7" y="945.04" font-size="14.8" fill="#fff" textLength="21.89" lengthAdjust="spacingAndGlyphs">0.69</text>
<text x="759.2" y="945.04" font-size="14.8" fill="#fff" textLength="21.89" lengthAdjust="spacingAndGlyphs">1.25</text>
<text x="803.5" y="945.04" font-size="14.8" fill="#fff" textLength="28.15" lengthAdjust="spacingAndGlyphs">67.48</text>
<text x="839.1" y="945.04" font-size="14.8" fill="#fff" textLength="21.89" lengthAdjust="spacingAndGlyphs">2.40</text>
<text x="891.2" y="945.04" font-size="14.8" fill="#fff" textLength="21.89" lengthAdjust="spacingAndGlyphs">0.88</text>
<text x="944.4" y="945.04" font-size="14.8" fill="#fff" textLength="21.89" lengthAdjust="spacingAndGlyphs">0.93</text>
<text x="991.3" y="945.04" font-size="14.8" fill="#fff" textLength="21.89" lengthAdjust="spacingAndGlyphs">1.64</text>
<text x="1032.2" y="945.04" font-size="14.8" fill="#fff" textLength="21.89" lengthAdjust="spacingAndGlyphs">1.22</text>
<text x="1096.3" y="945.04" font-size="14.8" fill="#fff" textLength="21.89" lengthAdjust="spacingAndGlyphs">1.01</text>
<text x="1164.9" y="945.04" font-size="14.8" fill="#fff" textLength="21.89" lengthAdjust="spacingAndGlyphs">0.41</text>
<text x="1207.5" y="945.04" font-size="14.8" fill="#fff" textLength="21.89" lengthAdjust="spacingAndGlyphs">1.36</text>
<text x="1278" y="945.04" font-size="14.8" fill="#fff" textLength="21.89" lengthAdjust="spacingAndGlyphs">0.59</text>
<text x="1354.1" y="945.04" font-size="14.8" fill="#fff" textLength="27.31" lengthAdjust="spacingAndGlyphs">11.58</text>
<text x="1392.4" y="945.04" font-size="14.8" fill="#fff" textLength="21.89" lengthAdjust="spacingAndGlyphs">0.40</text>
<text x="1462.8" y="945.04" font-size="14.8" fill="#fff" textLength="21.89" lengthAdjust="spacingAndGlyphs">0.58</text>
<text x="1539.3" y="945.04" font-size="14.8" fill="#fff" textLength="21.89" lengthAdjust="spacingAndGlyphs">2.80</text>
<text x="1575" y="945.04" font-size="14.8" fill="#fff" textLength="21.89" lengthAdjust="spacingAndGlyphs">1.71</text>
<text x="1611.3" y="945.04" font-size="14.8" fill="#fff" textLength="21.89" lengthAdjust="spacingAndGlyphs">2.51</text>
<text x="1647" y="945.04" font-size="14.8" fill="#fff" textLength="21.89" lengthAdjust="spacingAndGlyphs">0.72</text>
<text x="1689.3" y="945.04" font-size="14.8" fill="#fff" textLength="21.89" lengthAdjust="spacingAndGlyphs">0.78</text>
<text x="1739.2" y="945.04" font-size="14.8" fill="#fff" textLength="21.89" lengthAdjust="spacingAndGlyphs">0.52</text>
<text x="1775.2" y="945.04" font-size="14.8" fill="#fff" textLength="21.89" lengthAdjust="spacingAndGlyphs">0.80</text>
<text x="1830" y="945.04" font-size="14.8" fill="#fff" textLength="21.89" lengthAdjust="spacingAndGlyphs">1.12</text>
<text x="1896" y="945.04" font-size="14.8" fill="#fff" textLength="21.89" lengthAdjust="spacingAndGlyphs">9.68</text>
</g></g>
<rect x="501.3" y="952.5" width="1418.7" height="15.5" fill="#5c5c5c"/>
<rect x="514.6" y="953.7" width="838.9" height="12.9" fill="#434343" rx="5"/>
<rect x="502" y="953.7" width="9.5" height="13.1" fill="#909090" rx="2.5"/>
<rect x="1909.8" y="953.7" width="9.5" height="13.1" fill="#909090" rx="2.5"/>
<path d="M505.95 960.25 l5.58 -4.34 v8.68 z" fill="#333"/>
<path d="M1915.35 960.25 l-5.58 -4.34 v8.68 z" fill="#333"/>
<g clip-path="url(#bbc)"><g>
<path d="M151.3 1047.6 V1015 Q151.3 1011.5 154.8 1011.5 H184.7 Q188.2 1011.5 188.2 1015 V1047.6 Z" fill="url(#a76)" stroke="#3e3e3e" stroke-width="1.2"/>
<line x1="153.3" y1="1012.2" x2="186.3" y2="1012.2" stroke="#c4c4c4" stroke-width="1"/>
<rect x="155" y="1015.4" width="29.5" height="17.6" fill="#ffffff" rx="2.2" stroke="#ffffff" stroke-width="1"/>
<text x="169.8" y="1044.5" font-size="8.7" fill="#1c1c1c" text-anchor="middle" textLength="20.68" lengthAdjust="spacingAndGlyphs" stroke="#1c1c1c" stroke-width=".3">White</text>
<path d="M190.3 1047.6 V1015 Q190.3 1011.5 193.8 1011.5 H223.7 Q227.2 1011.5 227.2 1015 V1047.6 Z" fill="url(#a76)" stroke="#3e3e3e" stroke-width="1.2"/>
<line x1="192.3" y1="1012.2" x2="225.3" y2="1012.2" stroke="#c4c4c4" stroke-width="1"/>
<rect x="194" y="1015.4" width="29.5" height="17.6" fill="#e6e6e6" rx="2.2" stroke="#eeeeee" stroke-width="1"/>
<text x="208.8" y="1044.5" font-size="8.7" fill="#1c1c1c" text-anchor="middle" textLength="28.78" lengthAdjust="spacingAndGlyphs" stroke="#1c1c1c" stroke-width=".3">Gray 80</text>
<path d="M229.3 1047.6 V1015 Q229.3 1011.5 232.8 1011.5 H262.7 Q266.2 1011.5 266.2 1015 V1047.6 Z" fill="url(#a76)" stroke="#3e3e3e" stroke-width="1.2"/>
<line x1="231.3" y1="1012.2" x2="264.3" y2="1012.2" stroke="#c4c4c4" stroke-width="1"/>
<rect x="233" y="1015.4" width="29.5" height="17.6" fill="#d2d2d2" rx="2.2" stroke="#e1e1e1" stroke-width="1"/>
<text x="247.8" y="1044.5" font-size="8.7" fill="#1c1c1c" text-anchor="middle" textLength="28.78" lengthAdjust="spacingAndGlyphs" stroke="#1c1c1c" stroke-width=".3">Gray 65</text>
<path d="M268.3 1047.6 V1015 Q268.3 1011.5 271.8 1011.5 H301.7 Q305.2 1011.5 305.2 1015 V1047.6 Z" fill="url(#a76)" stroke="#3e3e3e" stroke-width="1.2"/>
<line x1="270.3" y1="1012.2" x2="303.3" y2="1012.2" stroke="#c4c4c4" stroke-width="1"/>
<rect x="272" y="1015.4" width="29.5" height="17.6" fill="#bababa" rx="2.2" stroke="#d2d2d2" stroke-width="1"/>
<text x="286.8" y="1044.5" font-size="8.7" fill="#1c1c1c" text-anchor="middle" textLength="28.78" lengthAdjust="spacingAndGlyphs" stroke="#1c1c1c" stroke-width=".3">Gray 50</text>
<path d="M307.3 1047.6 V1015 Q307.3 1011.5 310.8 1011.5 H340.7 Q344.2 1011.5 344.2 1015 V1047.6 Z" fill="url(#a76)" stroke="#3e3e3e" stroke-width="1.2"/>
<line x1="309.3" y1="1012.2" x2="342.3" y2="1012.2" stroke="#c4c4c4" stroke-width="1"/>
<rect x="311" y="1015.4" width="29.5" height="17.6" fill="#a0a0a0" rx="2.2" stroke="#c1c1c1" stroke-width="1"/>
<text x="325.8" y="1044.5" font-size="8.7" fill="#1c1c1c" text-anchor="middle" textLength="28.78" lengthAdjust="spacingAndGlyphs" stroke="#1c1c1c" stroke-width=".3">Gray 35</text>
<path d="M346.3 1047.6 V1015 Q346.3 1011.5 349.8 1011.5 H379.7 Q383.2 1011.5 383.2 1015 V1047.6 Z" fill="url(#a76)" stroke="#3e3e3e" stroke-width="1.2"/>
<line x1="348.3" y1="1012.2" x2="381.3" y2="1012.2" stroke="#c4c4c4" stroke-width="1"/>
<rect x="350" y="1015.4" width="29.5" height="17.6" fill="#000000" rx="2.2" stroke="#222" stroke-width="1"/>
<text x="364.8" y="1044.5" font-size="8.7" fill="#1c1c1c" text-anchor="middle" textLength="19.79" lengthAdjust="spacingAndGlyphs" stroke="#1c1c1c" stroke-width=".3">Black</text>
<path d="M385.3 1047.6 V1015 Q385.3 1011.5 388.8 1011.5 H418.7 Q422.2 1011.5 422.2 1015 V1047.6 Z" fill="url(#a76)" stroke="#3e3e3e" stroke-width="1.2"/>
<line x1="387.3" y1="1012.2" x2="420.3" y2="1012.2" stroke="#c4c4c4" stroke-width="1"/>
<rect x="389" y="1015.4" width="29.5" height="17.6" fill="#735244" rx="2.2" stroke="#a48e85" stroke-width="1"/>
<text x="403.8" y="1044.5" font-size="8.7" fill="#1c1c1c" text-anchor="middle" textLength="35.07" lengthAdjust="spacingAndGlyphs" stroke="#1c1c1c" stroke-width=".3">Dark Skin</text>
<path d="M424.3 1047.6 V1015 Q424.3 1011.5 427.8 1011.5 H457.7 Q461.2 1011.5 461.2 1015 V1047.6 Z" fill="url(#a76)" stroke="#3e3e3e" stroke-width="1.2"/>
<line x1="426.3" y1="1012.2" x2="459.3" y2="1012.2" stroke="#c4c4c4" stroke-width="1"/>
<rect x="428" y="1015.4" width="29.5" height="17.6" fill="#c29682" rx="2.2" stroke="#d7baad" stroke-width="1"/>
<text x="442.8" y="1044.5" font-size="8.7" fill="#1c1c1c" text-anchor="middle" textLength="35.53" lengthAdjust="spacingAndGlyphs" stroke="#1c1c1c" stroke-width=".3">Light Skin</text>
<path d="M463.3 1047.6 V1015 Q463.3 1011.5 466.8 1011.5 H496.7 Q500.2 1011.5 500.2 1015 V1047.6 Z" fill="url(#a76)" stroke="#3e3e3e" stroke-width="1.2"/>
<line x1="465.3" y1="1012.2" x2="498.3" y2="1012.2" stroke="#c4c4c4" stroke-width="1"/>
<rect x="467" y="1015.4" width="29.5" height="17.6" fill="#627a9d" rx="2.2" stroke="#98a8bf" stroke-width="1"/>
<text x="481.8" y="1044.5" font-size="8.7" fill="#1c1c1c" text-anchor="middle" textLength="31.93" lengthAdjust="spacingAndGlyphs" stroke="#1c1c1c" stroke-width=".3">Blue Sky</text>
<path d="M502.3 1047.6 V1015 Q502.3 1011.5 505.8 1011.5 H535.7 Q539.2 1011.5 539.2 1015 V1047.6 Z" fill="url(#a76)" stroke="#3e3e3e" stroke-width="1.2"/>
<line x1="504.3" y1="1012.2" x2="537.3" y2="1012.2" stroke="#c4c4c4" stroke-width="1"/>
<rect x="506" y="1015.4" width="29.5" height="17.6" fill="#576c43" rx="2.2" stroke="#919f84" stroke-width="1"/>
<text x="520.8" y="1044.5" font-size="8.7" fill="#1c1c1c" text-anchor="middle" textLength="26.54" lengthAdjust="spacingAndGlyphs" stroke="#1c1c1c" stroke-width=".3">Foliage</text>
<path d="M541.3 1047.6 V1015 Q541.3 1011.5 544.8 1011.5 H574.7 Q578.2 1011.5 578.2 1015 V1047.6 Z" fill="url(#a76)" stroke="#3e3e3e" stroke-width="1.2"/>
<line x1="543.3" y1="1012.2" x2="576.3" y2="1012.2" stroke="#c4c4c4" stroke-width="1"/>
<rect x="545" y="1015.4" width="29.5" height="9.5" fill="#8580b1" rx="2.2" stroke="#afaccc" stroke-width="1"/>
<text x="559.8" y="1035.4" font-size="8.7" fill="#1c1c1c" text-anchor="middle" textLength="16.19" lengthAdjust="spacingAndGlyphs" stroke="#1c1c1c" stroke-width=".3">Blue</text>
<text x="559.8" y="1044.6" font-size="8.7" fill="#1c1c1c" text-anchor="middle" textLength="24.28" lengthAdjust="spacingAndGlyphs" stroke="#1c1c1c" stroke-width=".3">Flower</text>
<path d="M580.3 1047.6 V1015 Q580.3 1011.5 583.8 1011.5 H613.7 Q617.2 1011.5 617.2 1015 V1047.6 Z" fill="url(#a76)" stroke="#3e3e3e" stroke-width="1.2"/>
<line x1="582.3" y1="1012.2" x2="615.3" y2="1012.2" stroke="#c4c4c4" stroke-width="1"/>
<rect x="584" y="1015.4" width="29.5" height="9.5" fill="#67bdaa" rx="2.2" stroke="#9cd4c7" stroke-width="1"/>
<text x="598.8" y="1035.4" font-size="8.7" fill="#1c1c1c" text-anchor="middle" textLength="22.04" lengthAdjust="spacingAndGlyphs" stroke="#1c1c1c" stroke-width=".3">Bluish</text>
<text x="598.8" y="1044.6" font-size="8.7" fill="#1c1c1c" text-anchor="middle" textLength="22.49" lengthAdjust="spacingAndGlyphs" stroke="#1c1c1c" stroke-width=".3">Green</text>
<path d="M619.3 1047.6 V1015 Q619.3 1011.5 622.8 1011.5 H652.7 Q656.2 1011.5 656.2 1015 V1047.6 Z" fill="url(#a76)" stroke="#3e3e3e" stroke-width="1.2"/>
<line x1="621.3" y1="1012.2" x2="654.3" y2="1012.2" stroke="#c4c4c4" stroke-width="1"/>
<rect x="623" y="1015.4" width="29.5" height="17.6" fill="#d67e2c" rx="2.2" stroke="#e4ab75" stroke-width="1"/>
<text x="637.8" y="1044.5" font-size="8.7" fill="#1c1c1c" text-anchor="middle" textLength="26.99" lengthAdjust="spacingAndGlyphs" stroke="#1c1c1c" stroke-width=".3">Orange</text>
<path d="M658.3 1047.6 V1015 Q658.3 1011.5 661.8 1011.5 H691.7 Q695.2 1011.5 695.2 1015 V1047.6 Z" fill="url(#a76)" stroke="#3e3e3e" stroke-width="1.2"/>
<line x1="660.3" y1="1012.2" x2="693.3" y2="1012.2" stroke="#c4c4c4" stroke-width="1"/>
<rect x="662" y="1015.4" width="29.5" height="9.5" fill="#505ba6" rx="2.2" stroke="#8d94c5" stroke-width="1"/>
<text x="661.1" y="1035.4" font-size="8.7" fill="#1c1c1c" textLength="29.23" lengthAdjust="spacingAndGlyphs" stroke="#1c1c1c" stroke-width=".3">Purplish</text>
<text x="661.1" y="1044.6" font-size="8.7" fill="#1c1c1c" textLength="16.19" lengthAdjust="spacingAndGlyphs" stroke="#1c1c1c" stroke-width=".3">Blue</text>
<path d="M697.3 1047.6 V1015 Q697.3 1011.5 700.8 1011.5 H730.7 Q734.2 1011.5 734.2 1015 V1047.6 Z" fill="url(#a76)" stroke="#3e3e3e" stroke-width="1.2"/>
<line x1="699.3" y1="1012.2" x2="732.3" y2="1012.2" stroke="#c4c4c4" stroke-width="1"/>
<rect x="701" y="1015.4" width="29.5" height="9.5" fill="#c15a63" rx="2.2" stroke="#d69399" stroke-width="1"/>
<text x="700.1" y="1035.4" font-size="8.7" fill="#1c1c1c" textLength="34.18" lengthAdjust="spacingAndGlyphs" stroke="#1c1c1c" stroke-width=".3">Moderate</text>
<text x="700.1" y="1044.6" font-size="8.7" fill="#1c1c1c" textLength="14.84" lengthAdjust="spacingAndGlyphs" stroke="#1c1c1c" stroke-width=".3">Red</text>
<path d="M736.3 1047.6 V1015 Q736.3 1011.5 739.8 1011.5 H769.7 Q773.2 1011.5 773.2 1015 V1047.6 Z" fill="url(#a76)" stroke="#3e3e3e" stroke-width="1.2"/>
<line x1="738.3" y1="1012.2" x2="771.3" y2="1012.2" stroke="#c4c4c4" stroke-width="1"/>
<rect x="740" y="1015.4" width="29.5" height="17.6" fill="#5e3c6c" rx="2.2" stroke="#96809f" stroke-width="1"/>
<text x="754.8" y="1044.5" font-size="8.7" fill="#1c1c1c" text-anchor="middle" textLength="23.39" lengthAdjust="spacingAndGlyphs" stroke="#1c1c1c" stroke-width=".3">Purple</text>
<path d="M775.3 1047.6 V1015 Q775.3 1011.5 778.8 1011.5 H808.7 Q812.2 1011.5 812.2 1015 V1047.6 Z" fill="url(#a76)" stroke="#3e3e3e" stroke-width="1.2"/>
<line x1="777.3" y1="1012.2" x2="810.3" y2="1012.2" stroke="#c4c4c4" stroke-width="1"/>
<rect x="779" y="1015.4" width="29.5" height="9.5" fill="#9dbc40" rx="2.2" stroke="#bfd382" stroke-width="1"/>
<text x="793.8" y="1035.4" font-size="8.7" fill="#1c1c1c" text-anchor="middle" textLength="23.09" lengthAdjust="spacingAndGlyphs" stroke="#1c1c1c" stroke-width=".3">Yellow</text>
<text x="793.8" y="1044.6" font-size="8.7" fill="#1c1c1c" text-anchor="middle" textLength="22.49" lengthAdjust="spacingAndGlyphs" stroke="#1c1c1c" stroke-width=".3">Green</text>
<path d="M814.3 1047.6 V1015 Q814.3 1011.5 817.8 1011.5 H847.7 Q851.2 1011.5 851.2 1015 V1047.6 Z" fill="url(#a76)" stroke="#3e3e3e" stroke-width="1.2"/>
<line x1="816.3" y1="1012.2" x2="849.3" y2="1012.2" stroke="#c4c4c4" stroke-width="1"/>
<rect x="818" y="1015.4" width="29.5" height="9.5" fill="#e0a32e" rx="2.2" stroke="#eac377" stroke-width="1"/>
<text x="832.8" y="1035.4" font-size="8.7" fill="#1c1c1c" text-anchor="middle" textLength="26.99" lengthAdjust="spacingAndGlyphs" stroke="#1c1c1c" stroke-width=".3">Orange</text>
<text x="832.8" y="1044.6" font-size="8.7" fill="#1c1c1c" text-anchor="middle" textLength="23.09" lengthAdjust="spacingAndGlyphs" stroke="#1c1c1c" stroke-width=".3">Yellow</text>
<path d="M853.3 1047.6 V1015 Q853.3 1011.5 856.8 1011.5 H886.7 Q890.2 1011.5 890.2 1015 V1047.6 Z" fill="url(#a76)" stroke="#3e3e3e" stroke-width="1.2"/>
<line x1="855.3" y1="1012.2" x2="888.3" y2="1012.2" stroke="#c4c4c4" stroke-width="1"/>
<rect x="857" y="1015.4" width="29.5" height="17.6" fill="#383d96" rx="2.2" stroke="#7d80ba" stroke-width="1"/>
<text x="871.8" y="1044.5" font-size="8.7" fill="#1c1c1c" text-anchor="middle" textLength="16.19" lengthAdjust="spacingAndGlyphs" stroke="#1c1c1c" stroke-width=".3">Blue</text>
<path d="M892.3 1047.6 V1015 Q892.3 1011.5 895.8 1011.5 H925.7 Q929.2 1011.5 929.2 1015 V1047.6 Z" fill="url(#a76)" stroke="#3e3e3e" stroke-width="1.2"/>
<line x1="894.3" y1="1012.2" x2="927.3" y2="1012.2" stroke="#c4c4c4" stroke-width="1"/>
<rect x="896" y="1015.4" width="29.5" height="17.6" fill="#469449" rx="2.2" stroke="#86b988" stroke-width="1"/>
<text x="910.8" y="1044.5" font-size="8.7" fill="#1c1c1c" text-anchor="middle" textLength="22.49" lengthAdjust="spacingAndGlyphs" stroke="#1c1c1c" stroke-width=".3">Green</text>
<path d="M931.3 1047.6 V1015 Q931.3 1011.5 934.8 1011.5 H964.7 Q968.2 1011.5 968.2 1015 V1047.6 Z" fill="url(#a76)" stroke="#3e3e3e" stroke-width="1.2"/>
<line x1="933.3" y1="1012.2" x2="966.3" y2="1012.2" stroke="#c4c4c4" stroke-width="1"/>
<rect x="935" y="1015.4" width="29.5" height="17.6" fill="#af363c" rx="2.2" stroke="#cb7c80" stroke-width="1"/>
<text x="949.8" y="1044.5" font-size="8.7" fill="#1c1c1c" text-anchor="middle" textLength="14.84" lengthAdjust="spacingAndGlyphs" stroke="#1c1c1c" stroke-width=".3">Red</text>
<path d="M970.3 1047.6 V1015 Q970.3 1011.5 973.8 1011.5 H1003.7 Q1007.2 1011.5 1007.2 1015 V1047.6 Z" fill="url(#a76)" stroke="#3e3e3e" stroke-width="1.2"/>
<line x1="972.3" y1="1012.2" x2="1005.3" y2="1012.2" stroke="#c4c4c4" stroke-width="1"/>
<rect x="974" y="1015.4" width="29.5" height="17.6" fill="#e7c71f" rx="2.2" stroke="#efda6d" stroke-width="1"/>
<text x="988.8" y="1044.5" font-size="8.7" fill="#1c1c1c" text-anchor="middle" textLength="23.09" lengthAdjust="spacingAndGlyphs" stroke="#1c1c1c" stroke-width=".3">Yellow</text>
<path d="M1009.3 1047.6 V1015 Q1009.3 1011.5 1012.8 1011.5 H1042.7 Q1046.2 1011.5 1046.2 1015 V1047.6 Z" fill="url(#a76)" stroke="#3e3e3e" stroke-width="1.2"/>
<line x1="1011.3" y1="1012.2" x2="1044.3" y2="1012.2" stroke="#c4c4c4" stroke-width="1"/>
<rect x="1013" y="1015.4" width="29.5" height="17.6" fill="#bb5695" rx="2.2" stroke="#d291ba" stroke-width="1"/>
<text x="1027.8" y="1044.5" font-size="8.7" fill="#1c1c1c" text-anchor="middle" textLength="31.49" lengthAdjust="spacingAndGlyphs" stroke="#1c1c1c" stroke-width=".3">Magenta</text>
<path d="M1048.3 1047.6 V1015 Q1048.3 1011.5 1051.8 1011.5 H1081.7 Q1085.2 1011.5 1085.2 1015 V1047.6 Z" fill="url(#a76)" stroke="#3e3e3e" stroke-width="1.2"/>
<line x1="1050.3" y1="1012.2" x2="1083.3" y2="1012.2" stroke="#c4c4c4" stroke-width="1"/>
<rect x="1052" y="1015.4" width="29.5" height="17.6" fill="#0885a1" rx="2.2" stroke="#5eafc1" stroke-width="1"/>
<text x="1066.8" y="1044.5" font-size="8.7" fill="#1c1c1c" text-anchor="middle" textLength="18.89" lengthAdjust="spacingAndGlyphs" stroke="#1c1c1c" stroke-width=".3">Cyan</text>
<path d="M1087.3 1047.6 V1015 Q1087.3 1011.5 1090.8 1011.5 H1120.7 Q1124.2 1011.5 1124.2 1015 V1047.6 Z" fill="url(#a76)" stroke="#3e3e3e" stroke-width="1.2"/>
<line x1="1089.3" y1="1012.2" x2="1122.3" y2="1012.2" stroke="#c4c4c4" stroke-width="1"/>
<rect x="1091" y="1015.4" width="29.5" height="17.6" fill="#ff0000" rx="2.2" stroke="#ff5959" stroke-width="1"/>
<text x="1105.8" y="1044.5" font-size="8.7" fill="#1c1c1c" text-anchor="middle" textLength="37.78" lengthAdjust="spacingAndGlyphs" stroke="#1c1c1c" stroke-width=".3">100% Red</text>
<path d="M1126.3 1047.6 V1015 Q1126.3 1011.5 1129.8 1011.5 H1159.7 Q1163.2 1011.5 1163.2 1015 V1047.6 Z" fill="url(#a76)" stroke="#3e3e3e" stroke-width="1.2"/>
<line x1="1128.3" y1="1012.2" x2="1161.3" y2="1012.2" stroke="#c4c4c4" stroke-width="1"/>
<rect x="1130" y="1015.4" width="29.5" height="9.5" fill="#00ff00" rx="2.2" stroke="#59ff59" stroke-width="1"/>
<text x="1144.8" y="1035.4" font-size="8.7" fill="#1c1c1c" text-anchor="middle" textLength="20.69" lengthAdjust="spacingAndGlyphs" stroke="#1c1c1c" stroke-width=".3">100%</text>
<text x="1144.8" y="1044.6" font-size="8.7" fill="#1c1c1c" text-anchor="middle" textLength="22.49" lengthAdjust="spacingAndGlyphs" stroke="#1c1c1c" stroke-width=".3">Green</text>
<path d="M1165.3 1047.6 V1015 Q1165.3 1011.5 1168.8 1011.5 H1198.7 Q1202.2 1011.5 1202.2 1015 V1047.6 Z" fill="url(#a76)" stroke="#3e3e3e" stroke-width="1.2"/>
<line x1="1167.3" y1="1012.2" x2="1200.3" y2="1012.2" stroke="#c4c4c4" stroke-width="1"/>
<rect x="1169" y="1015.4" width="29.5" height="9.5" fill="#0000ff" rx="2.2" stroke="#5959ff" stroke-width="1"/>
<text x="1183.8" y="1035.4" font-size="8.7" fill="#1c1c1c" text-anchor="middle" textLength="20.69" lengthAdjust="spacingAndGlyphs" stroke="#1c1c1c" stroke-width=".3">100%</text>
<text x="1183.8" y="1044.6" font-size="8.7" fill="#1c1c1c" text-anchor="middle" textLength="16.19" lengthAdjust="spacingAndGlyphs" stroke="#1c1c1c" stroke-width=".3">Blue</text>
<path d="M1204.3 1047.6 V1015 Q1204.3 1011.5 1207.8 1011.5 H1237.7 Q1241.2 1011.5 1241.2 1015 V1047.6 Z" fill="url(#a76)" stroke="#3e3e3e" stroke-width="1.2"/>
<line x1="1206.3" y1="1012.2" x2="1239.3" y2="1012.2" stroke="#c4c4c4" stroke-width="1"/>
<rect x="1208" y="1015.4" width="29.5" height="9.5" fill="#00ffff" rx="2.2" stroke="#59ffff" stroke-width="1"/>
<text x="1222.8" y="1035.4" font-size="8.7" fill="#1c1c1c" text-anchor="middle" textLength="20.69" lengthAdjust="spacingAndGlyphs" stroke="#1c1c1c" stroke-width=".3">100%</text>
<text x="1222.8" y="1044.6" font-size="8.7" fill="#1c1c1c" text-anchor="middle" textLength="18.89" lengthAdjust="spacingAndGlyphs" stroke="#1c1c1c" stroke-width=".3">Cyan</text>
<path d="M1243.3 1047.6 V1015 Q1243.3 1011.5 1246.8 1011.5 H1276.7 Q1280.2 1011.5 1280.2 1015 V1047.6 Z" fill="url(#a76)" stroke="#3e3e3e" stroke-width="1.2"/>
<line x1="1245.3" y1="1012.2" x2="1278.3" y2="1012.2" stroke="#c4c4c4" stroke-width="1"/>
<rect x="1247" y="1015.4" width="29.5" height="9.5" fill="#ff00ff" rx="2.2" stroke="#ff59ff" stroke-width="1"/>
<text x="1246.1" y="1035.4" font-size="8.7" fill="#1c1c1c" textLength="20.69" lengthAdjust="spacingAndGlyphs" stroke="#1c1c1c" stroke-width=".3">100%</text>
<text x="1246.1" y="1044.6" font-size="8.7" fill="#1c1c1c" textLength="31.49" lengthAdjust="spacingAndGlyphs" stroke="#1c1c1c" stroke-width=".3">Magenta</text>
<path d="M1282.3 1047.6 V1015 Q1282.3 1011.5 1285.8 1011.5 H1315.7 Q1319.2 1011.5 1319.2 1015 V1047.6 Z" fill="url(#a76)" stroke="#3e3e3e" stroke-width="1.2"/>
<line x1="1284.3" y1="1012.2" x2="1317.3" y2="1012.2" stroke="#c4c4c4" stroke-width="1"/>
<rect x="1286" y="1015.4" width="29.5" height="9.5" fill="#ffff00" rx="2.2" stroke="#ffff59" stroke-width="1"/>
<text x="1300.8" y="1035.4" font-size="8.7" fill="#1c1c1c" text-anchor="middle" textLength="20.69" lengthAdjust="spacingAndGlyphs" stroke="#1c1c1c" stroke-width=".3">100%</text>
<text x="1300.8" y="1044.6" font-size="8.7" fill="#1c1c1c" text-anchor="middle" textLength="23.09" lengthAdjust="spacingAndGlyphs" stroke="#1c1c1c" stroke-width=".3">Yellow</text>
<path d="M1321.3 1047.6 V1015 Q1321.3 1011.5 1324.8 1011.5 H1354.7 Q1358.2 1011.5 1358.2 1015 V1047.6 Z" fill="url(#a76)" stroke="#3e3e3e" stroke-width="1.2"/>
<line x1="1323.3" y1="1012.2" x2="1356.3" y2="1012.2" stroke="#c4c4c4" stroke-width="1"/>
<rect x="1325" y="1015.4" width="29.5" height="17.6" fill="#7a4a2c" rx="2.2" stroke="#a88975" stroke-width="1"/>
<text x="1339.8" y="1044.5" font-size="8.7" fill="#1c1c1c" text-anchor="middle" textLength="9.9" lengthAdjust="spacingAndGlyphs" stroke="#1c1c1c" stroke-width=".3">2E</text>
<path d="M1360.3 1047.6 V1015 Q1360.3 1011.5 1363.8 1011.5 H1393.7 Q1397.2 1011.5 1397.2 1015 V1047.6 Z" fill="url(#a76)" stroke="#3e3e3e" stroke-width="1.2"/>
<line x1="1362.3" y1="1012.2" x2="1395.3" y2="1012.2" stroke="#c4c4c4" stroke-width="1"/>
<rect x="1364" y="1015.4" width="29.5" height="17.6" fill="#cf916b" rx="2.2" stroke="#dfb79e" stroke-width="1"/>
<text x="1378.8" y="1044.5" font-size="8.7" fill="#1c1c1c" text-anchor="middle" textLength="9.44" lengthAdjust="spacingAndGlyphs" stroke="#1c1c1c" stroke-width=".3">2F</text>
<path d="M1399.3 1047.6 V1015 Q1399.3 1011.5 1402.8 1011.5 H1432.7 Q1436.2 1011.5 1436.2 1015 V1047.6 Z" fill="url(#a76)" stroke="#3e3e3e" stroke-width="1.2"/>
<line x1="1401.3" y1="1012.2" x2="1434.3" y2="1012.2" stroke="#c4c4c4" stroke-width="1"/>
<rect x="1403" y="1015.4" width="29.5" height="17.6" fill="#ffc89a" rx="2.2" stroke="#ffdbbd" stroke-width="1"/>
<text x="1417.8" y="1044.5" font-size="8.7" fill="#1c1c1c" text-anchor="middle" textLength="9.9" lengthAdjust="spacingAndGlyphs" stroke="#1c1c1c" stroke-width=".3">2K</text>
<path d="M1438.3 1047.6 V1015 Q1438.3 1011.5 1441.8 1011.5 H1471.7 Q1475.2 1011.5 1475.2 1015 V1047.6 Z" fill="url(#a76)" stroke="#3e3e3e" stroke-width="1.2"/>
<line x1="1440.3" y1="1012.2" x2="1473.3" y2="1012.2" stroke="#c4c4c4" stroke-width="1"/>
<rect x="1442" y="1015.4" width="29.5" height="17.6" fill="#ffc8a8" rx="2.2" stroke="#ffdbc6" stroke-width="1"/>
<text x="1456.8" y="1044.5" font-size="8.7" fill="#1c1c1c" text-anchor="middle" textLength="10.34" lengthAdjust="spacingAndGlyphs" stroke="#1c1c1c" stroke-width=".3">5D</text>
<path d="M1477.3 1047.6 V1015 Q1477.3 1011.5 1480.8 1011.5 H1510.7 Q1514.2 1011.5 1514.2 1015 V1047.6 Z" fill="url(#a76)" stroke="#3e3e3e" stroke-width="1.2"/>
<line x1="1479.3" y1="1012.2" x2="1512.3" y2="1012.2" stroke="#c4c4c4" stroke-width="1"/>
<rect x="1481" y="1015.4" width="29.5" height="17.6" fill="#f8a87a" rx="2.2" stroke="#fac6a8" stroke-width="1"/>
<text x="1495.8" y="1044.5" font-size="8.7" fill="#1c1c1c" text-anchor="middle" textLength="9.9" lengthAdjust="spacingAndGlyphs" stroke="#1c1c1c" stroke-width=".3">7E</text>
<path d="M1516.3 1047.6 V1015 Q1516.3 1011.5 1519.8 1011.5 H1549.7 Q1553.2 1011.5 1553.2 1015 V1047.6 Z" fill="url(#a76)" stroke="#3e3e3e" stroke-width="1.2"/>
<line x1="1518.3" y1="1012.2" x2="1551.3" y2="1012.2" stroke="#c4c4c4" stroke-width="1"/>
<rect x="1520" y="1015.4" width="29.5" height="17.6" fill="#d29464" rx="2.2" stroke="#e1b99a" stroke-width="1"/>
<text x="1534.8" y="1044.5" font-size="8.7" fill="#1c1c1c" text-anchor="middle" textLength="9.44" lengthAdjust="spacingAndGlyphs" stroke="#1c1c1c" stroke-width=".3">7F</text>
<path d="M1555.3 1047.6 V1015 Q1555.3 1011.5 1558.8 1011.5 H1588.7 Q1592.2 1011.5 1592.2 1015 V1047.6 Z" fill="url(#a76)" stroke="#3e3e3e" stroke-width="1.2"/>
<line x1="1557.3" y1="1012.2" x2="1590.3" y2="1012.2" stroke="#c4c4c4" stroke-width="1"/>
<rect x="1559" y="1015.4" width="29.5" height="17.6" fill="#a46a34" rx="2.2" stroke="#c39e7b" stroke-width="1"/>
<text x="1573.8" y="1044.5" font-size="8.7" fill="#1c1c1c" text-anchor="middle" textLength="10.79" lengthAdjust="spacingAndGlyphs" stroke="#1c1c1c" stroke-width=".3">7G</text>
<path d="M1594.3 1047.6 V1015 Q1594.3 1011.5 1597.8 1011.5 H1627.7 Q1631.2 1011.5 1631.2 1015 V1047.6 Z" fill="url(#a76)" stroke="#3e3e3e" stroke-width="1.2"/>
<line x1="1596.3" y1="1012.2" x2="1629.3" y2="1012.2" stroke="#c4c4c4" stroke-width="1"/>
<rect x="1598" y="1015.4" width="29.5" height="17.6" fill="#d99c76" rx="2.2" stroke="#e6bea5" stroke-width="1"/>
<text x="1612.8" y="1044.5" font-size="8.7" fill="#1c1c1c" text-anchor="middle" textLength="10.34" lengthAdjust="spacingAndGlyphs" stroke="#1c1c1c" stroke-width=".3">7H</text>
<path d="M1633.3 1047.6 V1015 Q1633.3 1011.5 1636.8 1011.5 H1666.7 Q1670.2 1011.5 1670.2 1015 V1047.6 Z" fill="url(#a76)" stroke="#3e3e3e" stroke-width="1.2"/>
<line x1="1635.3" y1="1012.2" x2="1668.3" y2="1012.2" stroke="#c4c4c4" stroke-width="1"/>
<rect x="1637" y="1015.4" width="29.5" height="17.6" fill="#c96a1c" rx="2.2" stroke="#db9e6b" stroke-width="1"/>
<text x="1651.8" y="1044.5" font-size="8.7" fill="#1c1c1c" text-anchor="middle" textLength="6.75" lengthAdjust="spacingAndGlyphs" stroke="#1c1c1c" stroke-width=".3">7I</text>
</g></g>
<rect x="151" y="1048.2" width="1526" height="9" fill="#646464"/>
<rect x="160.6" y="1049.4" width="1253.4" height="6.4" fill="#444444" rx="3.2"/>
<rect x="151.7" y="1049.4" width="8" height="6.6" fill="#909090" rx="2.5"/>
<rect x="1668.3" y="1049.4" width="8" height="6.6" fill="#909090" rx="2.5"/>
<path d="M153.7 1052.7 l3.24 -2.52 v5.04 z" fill="#333"/>
<path d="M1674.3 1052.7 l-3.24 -2.52 v5.04 z" fill="#333"/>
<path d="M1677.8 1058 V1030 Q1677.8 1026 1681.8 1026 H1710 Q1714 1026 1714 1030 V1058 Z" fill="url(#a77)"/>
<rect x="1685" y="1030.5" width="21.2" height="21.4" fill="url(#a78)" rx="4" stroke="#1a1a1a" stroke-width="1.7"/>
<rect x="1691" y="1036.2" width="9.8" height="10.4" fill="#000"/>
<rect x="1715" y="1011.5" width="33.75" height="23" fill="url(#a79)" stroke="#505050" stroke-width="1"/>
<circle cx="1731.7" cy="1021.8" r="7" fill="url(#a80)"/>
<circle cx="1731.7" cy="1021.8" r="5.6" fill="#808080"/>
<rect x="1748.75" y="1011.5" width="33.75" height="23" fill="url(#a79)" stroke="#505050" stroke-width="1"/>
<circle cx="1765.6" cy="1021.8" r="7" fill="url(#a80)"/>
<circle cx="1765.6" cy="1021.8" r="5.6" fill="#808080"/>
<rect x="1782.5" y="1011.5" width="33.75" height="23" fill="url(#a79)" stroke="#505050" stroke-width="1"/>
<circle cx="1799.5" cy="1021.8" r="7" fill="url(#a80)"/>
<circle cx="1799.5" cy="1021.8" r="5.6" fill="#808080"/>
<rect x="1816.25" y="1011.5" width="33.75" height="23" fill="url(#a79)" stroke="#505050" stroke-width="1"/>
<circle cx="1833.4" cy="1021.8" r="7" fill="url(#a80)"/>
<circle cx="1833.4" cy="1021.8" r="5.6" fill="#808080"/>
<rect x="1850.3" y="1011.5" width="70" height="23" fill="url(#a81)"/>
<line x1="1884.5" y1="1011.5" x2="1884.5" y2="1034" stroke="#262626" stroke-width="1"/>
<circle cx="1868.4" cy="1021.8" r="7" fill="url(#a82)"/>
<circle cx="1900.5" cy="1021.8" r="7" fill="url(#a83)"/>
<rect x="1715" y="1035" width="101.5" height="25" fill="url(#a84)" rx="3" stroke="#5c5c5c" stroke-width="1"/>
<rect x="1816.5" y="1035" width="102" height="25" fill="url(#a84)" rx="3" stroke="#5c5c5c" stroke-width="1"/>
<line x1="1716" y1="1036" x2="1918" y2="1036" stroke="#d0d0d0" stroke-width="1"/>
<circle cx="1737.5" cy="1046.3" r="7" fill="url(#a85)"/>
<circle cx="1898.3" cy="1046.3" r="7" fill="url(#a86)"/>
<text x="1737.5" y="1050.6" font-size="14" fill="#2a2a2a" text-anchor="middle">«</text>
<text x="1898.3" y="1050.6" font-size="14" fill="#2a2a2a" text-anchor="middle">»</text>
<text x="1776.3" y="1051.8" font-size="17.4" fill="#282828" text-anchor="middle" textLength="38" lengthAdjust="spacingAndGlyphs" stroke="#282828" stroke-width=".35">Back</text>
<text x="1856.8" y="1051.8" font-size="17.4" fill="#282828" text-anchor="middle" textLength="38.5" lengthAdjust="spacingAndGlyphs" stroke="#282828" stroke-width=".35">Next</text>
</svg>
<div id="cie" style="position:absolute;left:1231px;top:153px;width:677px;height:522px;overflow:hidden"><div style="position:absolute;left:0;top:0;width:100%;height:100%;isolation:isolate;clip-path:path('M288.7 506.7 L285.7 507.1 L282.4 505.6 L279.8 503.9 L277.4 502.0 L274.4 499.7 L270.9 496.8 L268.2 494.5 L265.3 492.0 L262.1 489.2 L258.5 486.3 L254.6 483.0 L250.1 479.3 L247.8 477.4 L245.3 475.3 L242.7 473.2 L240.0 470.9 L237.2 468.6 L234.3 466.2 L231.3 463.7 L228.2 461.0 L224.9 458.2 L221.5 455.2 L218.0 452.0 L214.3 448.7 L210.6 445.2 L206.7 441.4 L202.7 437.5 L198.5 433.3 L194.1 428.7 L189.5 423.6 L184.5 417.9 L179.2 411.7 L173.5 404.8 L167.6 397.4 L161.4 389.5 L155.1 381.2 L148.6 372.4 L142.0 363.1 L135.2 353.3 L128.2 343.0 L121.1 332.2 L114.0 320.9 L106.7 309.3 L99.5 297.4 L92.2 285.2 L85.0 272.9 L77.9 260.4 L70.9 247.9 L64.1 235.2 L57.6 222.6 L51.5 210.2 L45.7 197.9 L40.3 185.8 L35.3 174.0 L30.6 162.6 L26.2 151.5 L22.1 140.9 L18.4 130.7 L15.1 121.1 L12.2 112.0 L9.6 103.4 L7.4 95.4 L5.5 87.9 L4.0 80.9 L2.7 74.3 L1.7 68.2 L1.0 62.6 L0.5 57.4 L0.4 52.6 L0.4 48.1 L0.7 44.0 L1.2 40.1 L1.9 36.5 L2.9 33.2 L4.0 30.1 L5.4 27.3 L8.7 22.5 L12.6 18.7 L17.2 15.8 L22.2 13.7 L27.6 12.2 L33.4 11.3 L36.4 11.0 L39.4 10.7 L42.5 10.5 L45.7 10.4 L48.9 10.3 L52.1 10.2 L55.3 10.2 L58.5 10.2 L61.7 10.2 L64.9 10.2 L68.1 10.3 L71.4 10.4 L74.7 10.5 L78.0 10.6 L81.4 10.8 L84.8 11.0 L88.2 11.2 L91.7 11.4 L95.3 11.6 L98.9 11.9 L102.6 12.2 L106.3 12.5 L110.1 12.8 L114.0 13.1 L117.9 13.5 L121.9 13.9 L126.0 14.2 L130.1 14.7 L134.4 15.1 L138.7 15.5 L143.1 16.0 L147.6 16.4 L152.2 16.9 L156.9 17.4 L161.7 17.9 L166.6 18.5 L171.6 19.0 L176.7 19.6 L181.9 20.2 L187.2 20.8 L192.6 21.4 L198.1 22.0 L203.7 22.6 L209.5 23.3 L215.3 23.9 L221.3 24.6 L227.4 25.3 L233.6 26.0 L239.9 26.8 L246.4 27.5 L253.0 28.2 L259.7 29.0 L266.5 29.8 L273.4 30.6 L280.4 31.4 L287.6 32.2 L294.8 33.1 L302.2 33.9 L309.7 34.8 L317.3 35.7 L325.0 36.6 L332.8 37.5 L340.6 38.4 L348.6 39.3 L356.6 40.2 L364.7 41.1 L372.9 42.1 L381.1 43.0 L389.4 44.0 L397.7 44.9 L406.0 45.9 L414.2 46.8 L422.3 47.8 L430.3 48.7 L438.3 49.6 L446.2 50.5 L454.2 51.5 L462.1 52.4 L470.0 53.3 L477.8 54.2 L485.5 55.1 L493.1 55.9 L500.4 56.8 L507.6 57.6 L514.6 58.4 L521.5 59.2 L528.2 60.0 L534.8 60.7 L541.2 61.5 L547.4 62.2 L553.5 62.9 L559.3 63.6 L565.0 64.2 L570.5 64.8 L575.8 65.5 L580.9 66.0 L585.9 66.6 L590.6 67.2 L595.2 67.7 L599.7 68.2 L604.0 68.7 L608.1 69.2 L612.1 69.6 L615.9 70.1 L619.7 70.5 L623.3 70.9 L626.8 71.3 L630.2 71.7 L633.6 72.1 L636.8 72.5 L640.0 72.9 L643.0 73.2 L648.8 73.9 L654.2 74.5 L659.2 75.1 L663.8 75.6 L668.0 76.1 L671.7 76.5 L674.9 76.9 L679.3 77.4 L683.1 77.8 L686.3 78.2 L689.6 78.6 L693.1 79.0 L696.3 79.4 L699.6 79.7 L702.3 80.0 Z')"><div class="cl" style="background:conic-gradient(from 0deg at 196.78px 383.54px,#92ffff 0deg,#c7ffff 2.75deg,#fffeff 5.38deg,#ffe2ff 6.75deg,#ffc6ff 8.38deg,#ffabff 10.25deg,#ff91ff 12.5deg,#ff79ff 15.12deg,#ff61ff 18.25deg,#ff4aff 22.12deg,#ff34ff 26.88deg,#ff1fff 32.75deg,#ff09ff 40.38deg,#ff00ff 44.62deg,#ff00ff 170.75deg,#0000ff 170.88deg,#0000ff 224.25deg,#00ffff 224.38deg,#00ffff 350.75deg,#04ffff 351.12deg,#3affff 354.75deg,#6fffff 358deg,#92ffff 360deg)"></div><div class="cl cd" style="background:conic-gradient(from 0deg at 507.42px 65.77px,#ffff00 0deg,#ffff00 44.25deg,#ff0000 44.38deg,#ff0000 95.25deg,#ff00ff 95.38deg,#ff01ff 224.62deg,#ff17ff 232.38deg,#ff2cff 238.38deg,#ff43ff 243.12deg,#ff59ff 247deg,#ff72ff 250.25deg,#ff8bff 253deg,#ffa5ff 255.25deg,#ffbfff 257.12deg,#ffdaff 258.75deg,#fff8ff 260.25deg,#fffeff 260.5deg,#fffffa 260.75deg,#ffffc7 263.12deg,#ffff95 265.75deg,#ffff63 268.62deg,#ffff31 271.88deg,#ffff01 275.25deg,#ffff00 275.38deg,#ffff00 360deg)"></div><div class="cl cd" style="background:conic-gradient(from 0deg at 139.86px 31.29px,#ffff00 0deg,#ffff01 95.5deg,#ffff2d 105.38deg,#ffff53 112.88deg,#ffff78 119deg,#ffff9b 124.12deg,#ffffbf 128.5deg,#ffffe2 132.25deg,#fffffe 134.88deg,#d2ffff 139.12deg,#acffff 143.38deg,#85ffff 148.25deg,#5effff 154deg,#34ffff 161deg,#03ffff 170.12deg,#00ffff 171deg,#00ffff 275.25deg,#00ff00 275.38deg,#00ff00 350.75deg,#ffff00 350.88deg,#ffff00 360deg)"></div></div></div>
<svg width="1920" height="1058" viewBox="0 0 1920 1058"><defs><clipPath id="pc"><rect x="1231" y="153" width="677" height="522"/></clipPath><linearGradient id="b1" x1="0" y1="0" x2="1" y2="1"><stop offset="0" stop-color="#ff8c28"/><stop offset="1" stop-color="#ff4020"/></linearGradient></defs>
<path d="M1519.7 659.7 L1516.7 660.1 L1513.4 658.6 L1510.8 656.9 L1508.4 655.0 L1505.4 652.7 L1501.9 649.8 L1499.2 647.5 L1496.3 645.0 L1493.1 642.2 L1489.5 639.3 L1485.6 636.0 L1481.1 632.3 L1478.8 630.4 L1476.3 628.3 L1473.7 626.2 L1471.0 623.9 L1468.2 621.6 L1465.3 619.2 L1462.3 616.7 L1459.2 614.0 L1455.9 611.2 L1452.5 608.2 L1449.0 605.0 L1445.3 601.7 L1441.6 598.2 L1437.7 594.4 L1433.7 590.5 L1429.5 586.3 L1425.1 581.7 L1420.5 576.6 L1415.5 570.9 L1410.2 564.7 L1404.5 557.8 L1398.6 550.4 L1392.4 542.5 L1386.1 534.2 L1379.6 525.4 L1373.0 516.1 L1366.2 506.3 L1359.2 496.0 L1352.1 485.2 L1345.0 473.9 L1337.7 462.3 L1330.5 450.4 L1323.2 438.2 L1316.0 425.9 L1308.9 413.4 L1301.9 400.9 L1295.1 388.2 L1288.6 375.6 L1282.5 363.2 L1276.7 350.9 L1271.3 338.8 L1266.3 327.0 L1261.6 315.6 L1257.2 304.5 L1253.1 293.9 L1249.4 283.7 L1246.1 274.1 L1243.2 265.0 L1240.6 256.4 L1238.4 248.4 L1236.5 240.9 L1235.0 233.9 L1233.7 227.3 L1232.7 221.2 L1232.0 215.6 L1231.5 210.4 L1231.4 205.6 L1231.4 201.1 L1231.7 197.0 L1232.2 193.1 L1232.9 189.5 L1233.9 186.2 L1235.0 183.1 L1236.4 180.3 L1239.7 175.5 L1243.6 171.7 L1248.2 168.8 L1253.2 166.7 L1258.6 165.2 L1264.4 164.3 L1267.4 164.0 L1270.4 163.7 L1273.5 163.5 L1276.7 163.4 L1279.9 163.3 L1283.1 163.2 L1286.3 163.2 L1289.5 163.2 L1292.7 163.2 L1295.9 163.2 L1299.1 163.3 L1302.4 163.4 L1305.7 163.5 L1309.0 163.6 L1312.4 163.8 L1315.8 164.0 L1319.2 164.2 L1322.7 164.4 L1326.3 164.6 L1329.9 164.9 L1333.6 165.2 L1337.3 165.5 L1341.1 165.8 L1345.0 166.1 L1348.9 166.5 L1352.9 166.9 L1357.0 167.2 L1361.1 167.7 L1365.4 168.1 L1369.7 168.5 L1374.1 169.0 L1378.6 169.4 L1383.2 169.9 L1387.9 170.4 L1392.7 170.9 L1397.6 171.5 L1402.6 172.0 L1407.7 172.6 L1412.9 173.2 L1418.2 173.8 L1423.6 174.4 L1429.1 175.0 L1434.7 175.6 L1440.5 176.3 L1446.3 176.9 L1452.3 177.6 L1458.4 178.3 L1464.6 179.0 L1470.9 179.8 L1477.4 180.5 L1484.0 181.2 L1490.7 182.0 L1497.5 182.8 L1504.4 183.6 L1511.4 184.4 L1518.6 185.2 L1525.8 186.1 L1533.2 186.9 L1540.7 187.8 L1548.3 188.7 L1556.0 189.6 L1563.8 190.5 L1571.6 191.4 L1579.6 192.3 L1587.6 193.2 L1595.7 194.1 L1603.9 195.1 L1612.1 196.0 L1620.4 197.0 L1628.7 197.9 L1637.0 198.9 L1645.2 199.8 L1653.3 200.8 L1661.3 201.7 L1669.3 202.6 L1677.2 203.5 L1685.2 204.5 L1693.1 205.4 L1701.0 206.3 L1708.8 207.2 L1716.5 208.1 L1724.1 208.9 L1731.4 209.8 L1738.6 210.6 L1745.6 211.4 L1752.5 212.2 L1759.2 213.0 L1765.8 213.7 L1772.2 214.5 L1778.4 215.2 L1784.5 215.9 L1790.3 216.6 L1796.0 217.2 L1801.5 217.8 L1806.8 218.5 L1811.9 219.0 L1816.9 219.6 L1821.6 220.2 L1826.2 220.7 L1830.7 221.2 L1835.0 221.7 L1839.1 222.2 L1843.1 222.6 L1846.9 223.1 L1850.7 223.5 L1854.3 223.9 L1857.8 224.3 L1861.2 224.7 L1864.6 225.1 L1867.8 225.5 L1871.0 225.9 L1874.0 226.2 L1879.8 226.9 L1885.2 227.5 L1890.2 228.1 L1894.8 228.6 L1899.0 229.1 L1902.7 229.5 L1905.9 229.9 L1910.3 230.4 L1914.1 230.8 L1917.3 231.2 L1920.6 231.6 L1924.1 232.0 L1927.3 232.4 L1930.6 232.7 L1933.3 233.0 Z M1738.4 218.8 L1370.9 184.3 L1427.8 536.5 Z" fill="#000" fill-opacity="0.39" fill-rule="evenodd" clip-path="url(#pc)"/>
<rect x="1363.8" y="177.3" width="13.9" height="13.9" fill="none" stroke="#fff" stroke-width="1.7"/>
<rect x="1389.3" y="202.55" width="13.9" height="13.9" fill="none" stroke="#fff" stroke-width="1.7"/>
<rect x="1431.05" y="194.3" width="13.9" height="13.9" fill="none" stroke="#fff" stroke-width="1.7"/>
<rect x="1453.05" y="185.05" width="13.9" height="13.9" fill="none" stroke="#fff" stroke-width="1.7"/>
<rect x="1481.8" y="189.8" width="13.9" height="13.9" fill="none" stroke="#fff" stroke-width="1.7"/>
<rect x="1515.05" y="197.3" width="13.9" height="13.9" fill="none" stroke="#fff" stroke-width="1.7"/>
<rect x="1428.05" y="218.05" width="13.9" height="13.9" fill="none" stroke="#fff" stroke-width="1.7"/>
<rect x="1396.8" y="250.55" width="13.9" height="13.9" fill="none" stroke="#fff" stroke-width="1.7"/>
<rect x="1379.3" y="271.05" width="13.9" height="13.9" fill="none" stroke="#fff" stroke-width="1.7"/>
<rect x="1385.05" y="304.05" width="13.9" height="13.9" fill="none" stroke="#fff" stroke-width="1.7"/>
<rect x="1421.05" y="301.05" width="13.9" height="13.9" fill="none" stroke="#fff" stroke-width="1.7"/>
<rect x="1443.05" y="306.8" width="13.9" height="13.9" fill="none" stroke="#fff" stroke-width="1.7"/>
<rect x="1480.55" y="325.55" width="13.9" height="13.9" fill="none" stroke="#fff" stroke-width="1.7"/>
<rect x="1424.05" y="357.3" width="13.9" height="13.9" fill="none" stroke="#fff" stroke-width="1.7"/>
<rect x="1546.8" y="296.05" width="13.9" height="13.9" fill="none" stroke="#fff" stroke-width="1.7"/>
<rect x="1581.05" y="246.3" width="13.9" height="13.9" fill="none" stroke="#fff" stroke-width="1.7"/>
<rect x="1646.05" y="233.55" width="13.9" height="13.9" fill="none" stroke="#fff" stroke-width="1.7"/>
<rect x="1566.8" y="378.05" width="13.9" height="13.9" fill="none" stroke="#fff" stroke-width="1.7"/>
<rect x="1731.3" y="211.8" width="13.9" height="13.9" fill="none" stroke="#fff" stroke-width="1.7"/>
<rect x="1424.3" y="411.55" width="13.9" height="13.9" fill="none" stroke="#fff" stroke-width="1.7"/>
<rect x="1421.3" y="529.55" width="13.9" height="13.9" fill="none" stroke="#fff" stroke-width="1.7"/>
<rect x="1486.05" y="240.55" width="13.9" height="13.9" fill="none" stroke="#fff" stroke-width="1.7"/>
<rect x="1486.05" y="228.05" width="13.9" height="13.9" fill="none" stroke="#fff" stroke-width="1.7"/>
<rect x="1500.55" y="233.05" width="13.9" height="13.9" fill="none" stroke="#fff" stroke-width="1.7"/>
<rect x="1506.05" y="216.8" width="13.9" height="13.9" fill="none" stroke="#fff" stroke-width="1.7"/>
<rect x="1510.55" y="228.05" width="13.9" height="13.9" fill="none" stroke="#fff" stroke-width="1.7"/>
<rect x="1516.8" y="226.05" width="13.9" height="13.9" fill="none" stroke="#fff" stroke-width="1.7"/>
<rect x="1524.3" y="210.55" width="13.9" height="13.9" fill="none" stroke="#fff" stroke-width="1.7"/>
<rect x="1533.05" y="209.3" width="13.9" height="13.9" fill="none" stroke="#fff" stroke-width="1.7"/>
<rect x="1540.55" y="216.05" width="13.9" height="13.9" fill="none" stroke="#fff" stroke-width="1.7"/>
<rect x="1533.55" y="224.3" width="13.9" height="13.9" fill="none" stroke="#fff" stroke-width="1.7"/>
<rect x="1560.55" y="200.55" width="13.9" height="13.9" fill="none" stroke="#fff" stroke-width="1.7"/>
<rect x="1560.55" y="204.3" width="13.9" height="13.9" fill="none" stroke="#fff" stroke-width="1.7"/>
<rect x="1446" y="259.75" width="13" height="13" fill="none" stroke="#fff" stroke-width="1.6"/>
<rect x="1445.75" y="259.5" width="13.5" height="13.5" fill="none" stroke="#000" stroke-width="2"/>
<rect x="1447.3" y="261" width="10.4" height="10.4" fill="none" stroke="#fff" stroke-width="1"/>
<circle cx="1372" cy="184.25" r="4.3" fill="#00ee00" stroke="#000" stroke-width="1.2"/>
<circle cx="1397.5" cy="211.75" r="4.3" fill="#4a9a4a" stroke="#000" stroke-width="1.2"/>
<circle cx="1438" cy="201.25" r="4.3" fill="#a0c040" stroke="#000" stroke-width="1.2"/>
<circle cx="1460" cy="192.75" r="4.3" fill="#ffff00" stroke="#000" stroke-width="1.2"/>
<circle cx="1488.75" cy="196.75" r="4.3" fill="#e8c020" stroke="#000" stroke-width="1.2"/>
<circle cx="1522" cy="204.25" r="4.3" fill="#e8a030" stroke="#000" stroke-width="1.2"/>
<circle cx="1436.5" cy="226" r="4.3" fill="#5a6e3a" stroke="#000" stroke-width="1.2"/>
<circle cx="1403.75" cy="256.25" r="4.3" fill="#60c0a8" stroke="#000" stroke-width="1.2"/>
<circle cx="1386.25" cy="276.5" r="4.3" fill="#00ffff" stroke="#000" stroke-width="1.2"/>
<circle cx="1390.5" cy="310" r="4.3" fill="#0088a8" stroke="#000" stroke-width="1.2"/>
<circle cx="1428" cy="308.75" r="4.3" fill="#5e7a9e" stroke="#000" stroke-width="1.2"/>
<circle cx="1451" cy="312.5" r="4.3" fill="#8080b8" stroke="#000" stroke-width="1.2"/>
<circle cx="1474" cy="334" r="4.3" fill="#5a3a6a" stroke="#000" stroke-width="1.2"/>
<circle cx="1431" cy="363" r="4.3" fill="#4a5aa8" stroke="#000" stroke-width="1.2"/>
<circle cx="1553.75" cy="303" r="4.3" fill="#c05090" stroke="#000" stroke-width="1.2"/>
<circle cx="1586.75" cy="253.25" r="4.3" fill="#c85060" stroke="#000" stroke-width="1.2"/>
<circle cx="1648.75" cy="240.5" r="4.3" fill="#b03038" stroke="#000" stroke-width="1.2"/>
<circle cx="1571.25" cy="385" r="4.3" fill="#ff00ff" stroke="#000" stroke-width="1.2"/>
<circle cx="1738.25" cy="218.75" r="4.3" fill="#ff0000" stroke="#000" stroke-width="1.2"/>
<circle cx="1432.5" cy="414" r="4.3" fill="#303090" stroke="#000" stroke-width="1.2"/>
<circle cx="1425.5" cy="521.5" r="4.3" fill="#0000ff" stroke="#000" stroke-width="1.2"/>
<circle cx="1435" cy="305" r="4.3" fill="#000" stroke="#000" stroke-width="1.2"/>
<circle cx="1493" cy="234.25" r="4.3" fill="#f8c8a0" stroke="#000" stroke-width="1.2"/>
<circle cx="1492" cy="243" r="4.3" fill="#f8c0a0" stroke="#000" stroke-width="1.2"/>
<circle cx="1502" cy="240.5" r="4.3" fill="#6a4a3a" stroke="#000" stroke-width="1.2"/>
<circle cx="1507" cy="233.75" r="4.3" fill="#c88860" stroke="#000" stroke-width="1.2"/>
<circle cx="1513" cy="223.75" r="4.3" fill="#e8a070" stroke="#000" stroke-width="1.2"/>
<circle cx="1513" cy="231.25" r="4.3" fill="#e8a878" stroke="#000" stroke-width="1.2"/>
<circle cx="1521.25" cy="232" r="4.3" fill="#e8a070" stroke="#000" stroke-width="1.2"/>
<circle cx="1530" cy="220" r="4.3" fill="#a06030" stroke="#000" stroke-width="1.2"/>
<circle cx="1530.75" cy="224.25" r="4.3" fill="#e09060" stroke="#000" stroke-width="1.2"/>
<circle cx="1536.25" cy="215.5" r="4.3" fill="#704020" stroke="#000" stroke-width="1.2"/>
<circle cx="1543.25" cy="221.25" r="4.3" fill="#7a4a2a" stroke="#000" stroke-width="1.2"/>
<circle cx="1537.5" cy="230" r="4.3" fill="#f0a878" stroke="#000" stroke-width="1.2"/>
<circle cx="1567.5" cy="208.75" r="4.3" fill="#a06028" stroke="#000" stroke-width="1.2"/>
<circle cx="1565" cy="210" r="4.3" fill="#b86a28" stroke="#000" stroke-width="1.2"/>
<circle cx="1453" cy="264.5" r="4.3" fill="#a0a0a0" stroke="#000" stroke-width="1.2"/>
<rect x="1691.7" y="492.5" width="209.5" height="136.8" fill="url(#b1)" stroke="#7a7a7a" stroke-width="2"/>
<rect x="1719.4" y="532.96" width="14.2" height="14.2" fill="none" stroke="#fff" stroke-width="1.6"/>
<rect x="1830.96" y="511.03" width="14.2" height="14.2" fill="none" stroke="#fff" stroke-width="1.6"/>
<rect x="1882.53" y="512.53" width="14.2" height="14.2" fill="none" stroke="#fff" stroke-width="1.6"/>
<rect x="1881.03" y="551.71" width="14.2" height="14.2" fill="none" stroke="#fff" stroke-width="1.6"/>
<rect x="1788.78" y="552.84" width="14.2" height="14.2" fill="none" stroke="#fff" stroke-width="1.6"/>
<rect x="1808.84" y="567.28" width="14.2" height="14.2" fill="none" stroke="#fff" stroke-width="1.6"/>
<rect x="1696.34" y="567.28" width="14.2" height="14.2" fill="none" stroke="#fff" stroke-width="1.6"/>
<rect x="1702.9" y="576.28" width="14.2" height="14.2" fill="none" stroke="#fff" stroke-width="1.6"/>
<rect x="1712.28" y="588.84" width="14.2" height="14.2" fill="none" stroke="#fff" stroke-width="1.6"/>
<rect x="1792.9" y="593.53" width="14.2" height="14.2" fill="none" stroke="#fff" stroke-width="1.6"/>
<circle cx="1723.5" cy="534.25" r="4.8" fill="#c89060" stroke="#000" stroke-width="1.2"/>
<circle cx="1882.5" cy="507.81" r="4.8" fill="#704020" stroke="#000" stroke-width="1.2"/>
<circle cx="1833.19" cy="524.13" r="4.8" fill="#8a5530" stroke="#000" stroke-width="1.2"/>
<circle cx="1877.81" cy="546.81" r="4.8" fill="#6a3a20" stroke="#000" stroke-width="1.2"/>
<circle cx="1797.19" cy="555.63" r="4.8" fill="#d89060" stroke="#000" stroke-width="1.2"/>
<circle cx="1816.31" cy="570.25" r="4.8" fill="#d08060" stroke="#000" stroke-width="1.2"/>
<circle cx="1706.25" cy="570.06" r="4.8" fill="#f0b090" stroke="#000" stroke-width="1.2"/>
<circle cx="1714.69" cy="575.88" r="4.8" fill="#d08860" stroke="#000" stroke-width="1.2"/>
<circle cx="1717.88" cy="589" r="4.8" fill="#d08060" stroke="#000" stroke-width="1.2"/>
<circle cx="1797.19" cy="594.63" r="4.8" fill="#f09878" stroke="#000" stroke-width="1.2"/>
<rect x="1637.5" y="640.5" width="267.5" height="28" fill="#333333"/>
<text x="1638.5" y="662.5" font-size="20.8" fill="#fff" textLength="236" lengthAdjust="spacingAndGlyphs">RGB Triplet: 217, 140, 94</text>
<g opacity="0.74">
<path d="M1631.6 996.4 L1670.2 1005 L1671 1026.5 M1631.6 996.4 L1634.2 1031.5 L1655 1045.4 L1697.5 1031.8 L1671 1027.5" fill="none" stroke="#fff" stroke-width="5.4" stroke-linejoin="round" stroke-linecap="round"/>
<path d="M1642.2 1009.4 L1653.6 1024.3 L1674.5 995.6" fill="none" stroke="#fff" stroke-width="4.6" stroke-linejoin="round" stroke-linecap="round"/>
<text x="1678" y="1025" font-size="26.5" font-weight="bold" fill="#fff" stroke="#fff" stroke-width="3.6" stroke-linejoin="round" textLength="145" lengthAdjust="spacingAndGlyphs">NOTEBOOK</text>
<text x="1824" y="1025" font-size="26.5" fill="#fff" stroke="#fff" stroke-width="3.2" stroke-linejoin="round" textLength="88" lengthAdjust="spacingAndGlyphs">CHECK</text>
<path d="M1631.6 996.4 L1670.2 1005 L1671 1026.5 M1631.6 996.4 L1634.2 1031.5 L1655 1045.4 L1697.5 1031.8 L1671 1027.5" fill="none" stroke="#9c2430" stroke-width="3.2" stroke-linejoin="round" stroke-linecap="round"/>
<path d="M1641 1029.4 L1671 1027.2" fill="none" stroke="#f4f4f4" stroke-width="1.5" stroke-linejoin="round" stroke-linecap="round"/>
<path d="M1642.2 1009.4 L1653.6 1024.3 L1674.5 995.6" fill="none" stroke="#3a3034" stroke-width="2.3" stroke-linejoin="round" stroke-linecap="round"/>
<text x="1678" y="1025" font-size="26.5" font-weight="bold" fill="#9c2430" stroke="#9c2430" stroke-width="1.1" stroke-linejoin="round" textLength="145" lengthAdjust="spacingAndGlyphs">NOTEBOOK</text>
<text x="1824" y="1025" font-size="26.5" fill="#2c2c2c" stroke="#2c2c2c" stroke-width="0.5" textLength="88" lengthAdjust="spacingAndGlyphs">CHECK</text>
</g>
</svg>
</body></html>
